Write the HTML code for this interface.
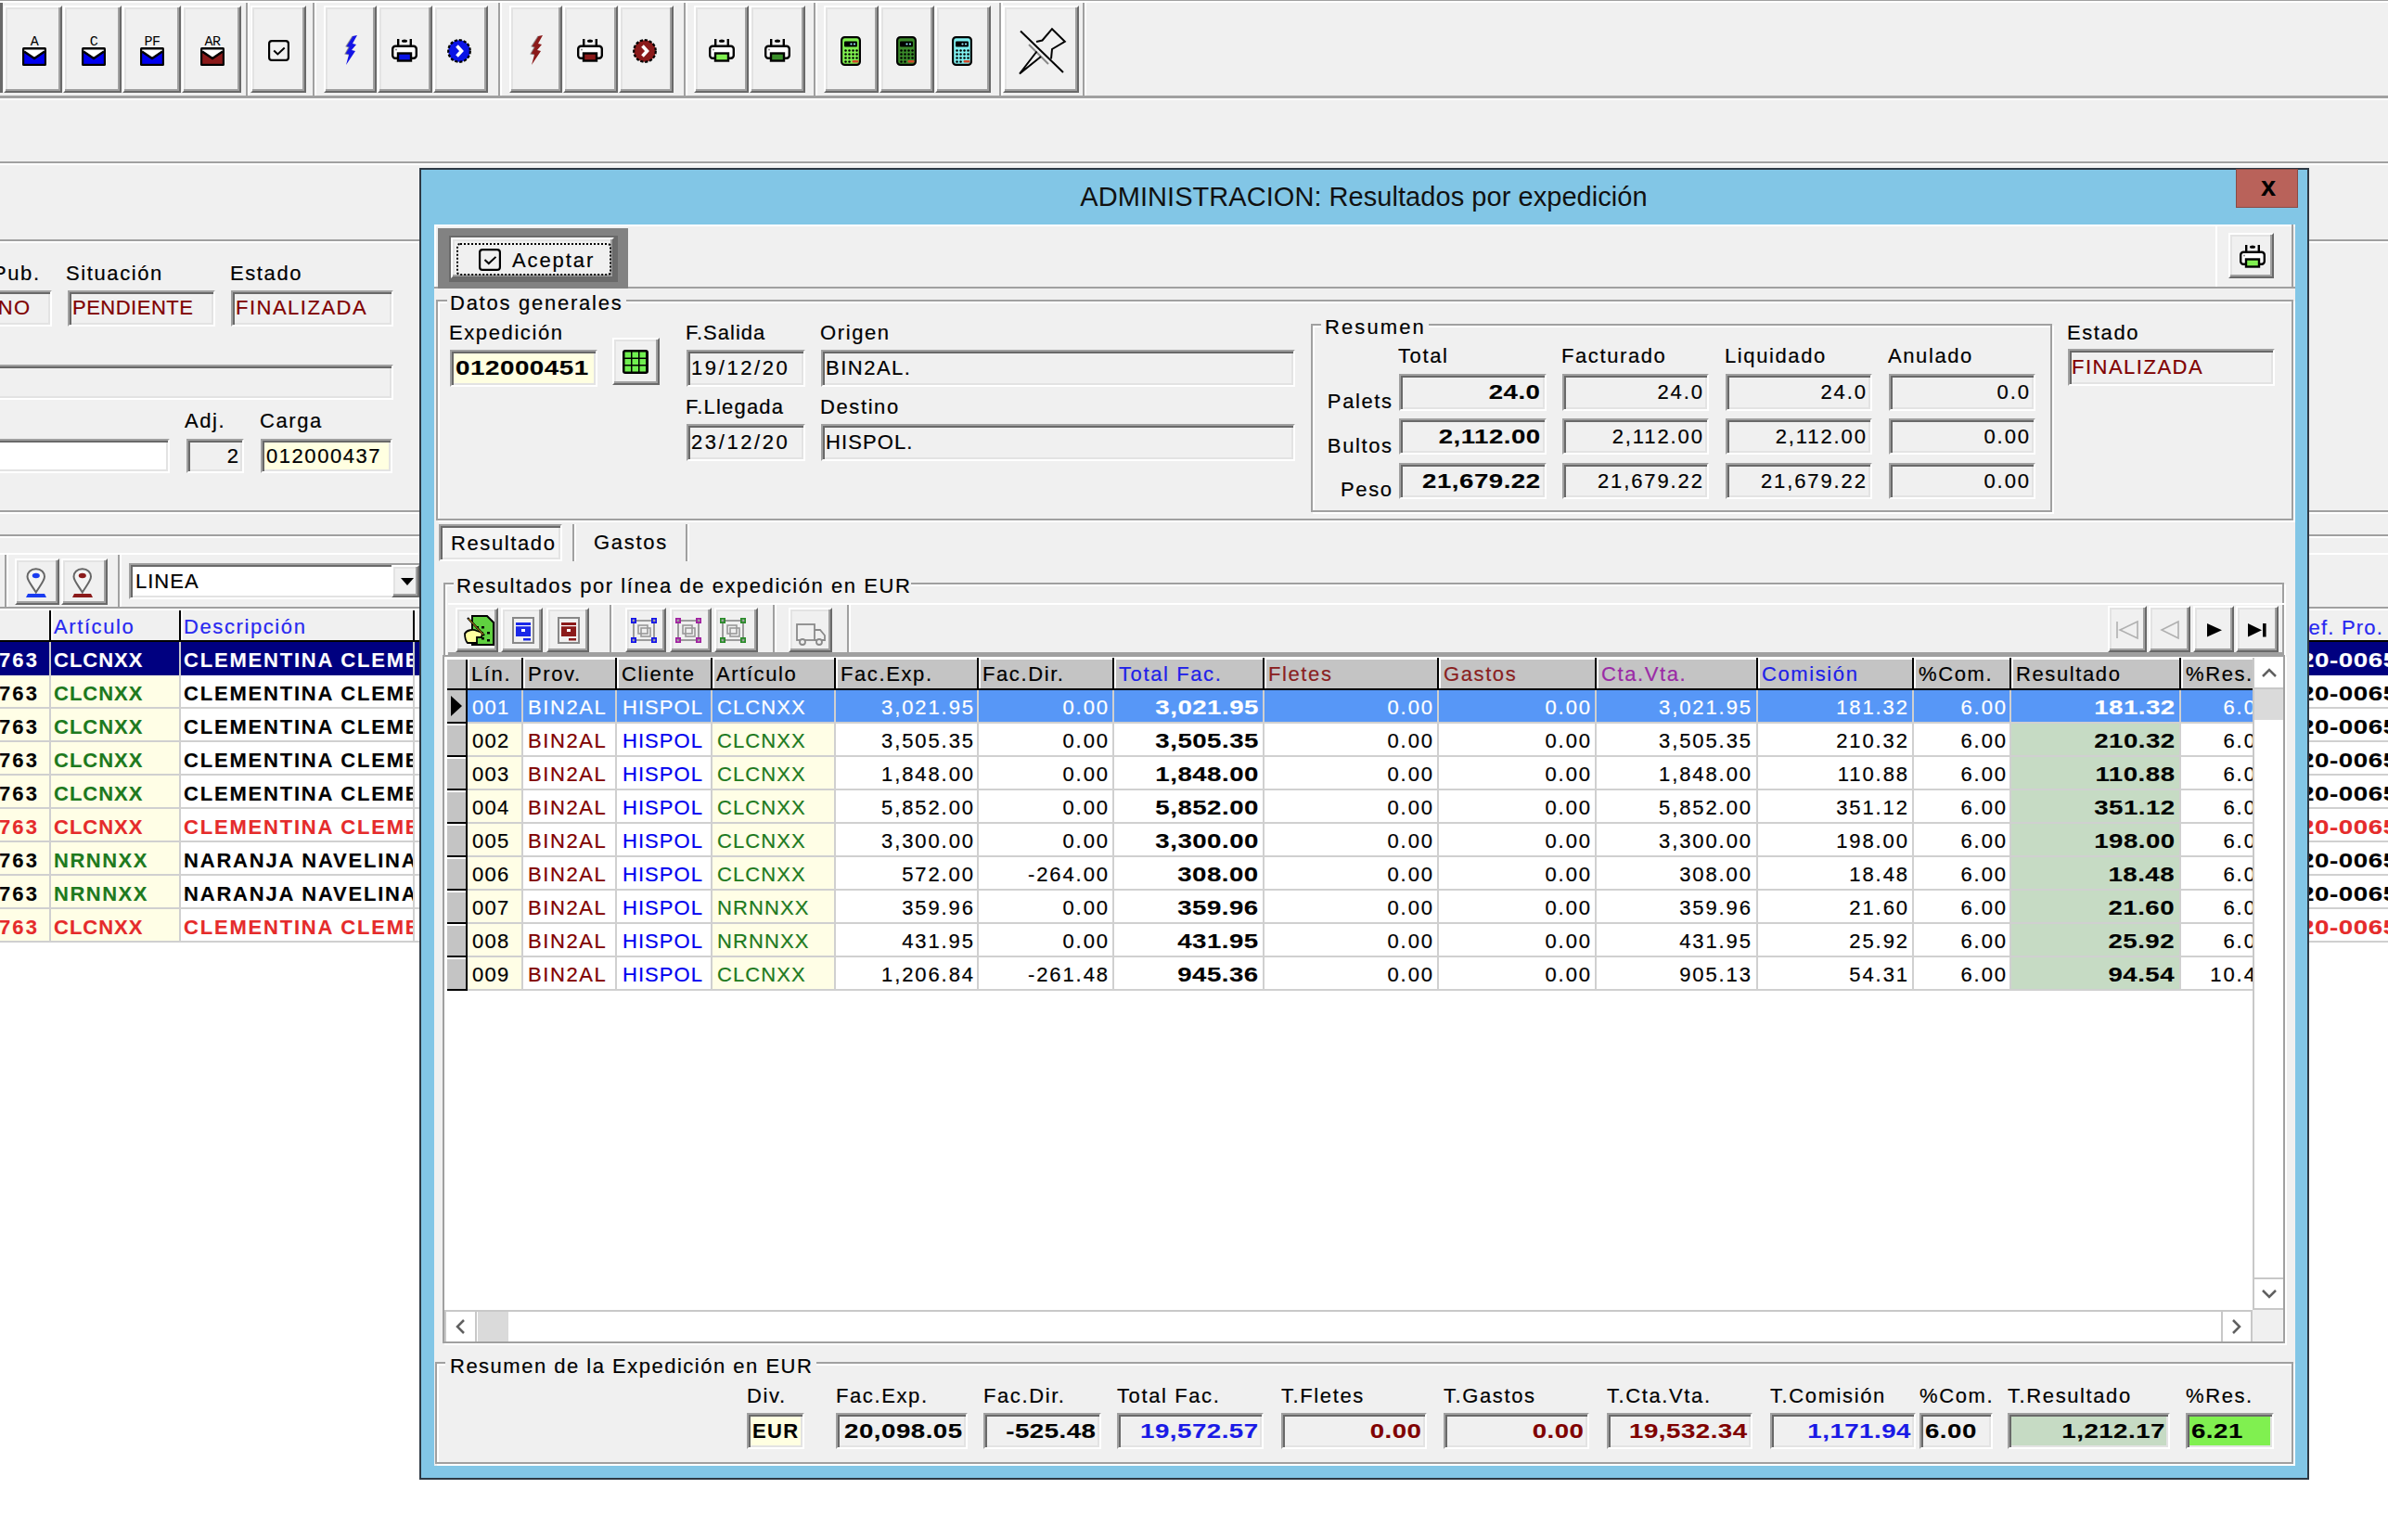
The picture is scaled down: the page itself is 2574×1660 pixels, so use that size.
<!DOCTYPE html>
<html><head><meta charset="utf-8"><style>
html,body{margin:0;padding:0;}
body{width:2574px;height:1660px;position:relative;overflow:hidden;background:#fff;font-family:"Liberation Sans",sans-serif;}
div,span,svg{position:absolute;}
span{font-family:"Liberation Sans",sans-serif;}
</style></head><body>
<div style="left:0px;top:0px;width:2574px;height:656px;background:#f0f0f0"></div>
<div style="left:0px;top:0px;width:2574px;height:1px;background:#a0a0a0"></div>
<div style="left:0px;top:1px;width:2574px;height:2px;background:#fff"></div>
<div style="left:0px;top:3px;width:3px;height:97px;background:#696969"></div>
<div style="left:4px;top:6px;width:63px;height:94px;box-sizing:border-box;background:#f0f0f0;border:2px solid;border-color:#fff #696969 #696969 #fff;box-shadow:inset -2px -2px #a0a0a0, inset 2px 2px #e3e3e3;"></div>
<div style="left:68px;top:6px;width:63px;height:94px;box-sizing:border-box;background:#f0f0f0;border:2px solid;border-color:#fff #696969 #696969 #fff;box-shadow:inset -2px -2px #a0a0a0, inset 2px 2px #e3e3e3;"></div>
<div style="left:132px;top:6px;width:63px;height:94px;box-sizing:border-box;background:#f0f0f0;border:2px solid;border-color:#fff #696969 #696969 #fff;box-shadow:inset -2px -2px #a0a0a0, inset 2px 2px #e3e3e3;"></div>
<div style="left:196px;top:6px;width:64px;height:94px;box-sizing:border-box;background:#f0f0f0;border:2px solid;border-color:#fff #696969 #696969 #fff;box-shadow:inset -2px -2px #a0a0a0, inset 2px 2px #e3e3e3;"></div>
<div style="left:270px;top:6px;width:60px;height:94px;box-sizing:border-box;background:#f0f0f0;border:2px solid;border-color:#fff #696969 #696969 #fff;box-shadow:inset -2px -2px #a0a0a0, inset 2px 2px #e3e3e3;"></div>
<div style="left:349px;top:6px;width:57px;height:94px;box-sizing:border-box;background:#f0f0f0;border:2px solid;border-color:#fff #696969 #696969 #fff;box-shadow:inset -2px -2px #a0a0a0, inset 2px 2px #e3e3e3;"></div>
<div style="left:407px;top:6px;width:59px;height:94px;box-sizing:border-box;background:#f0f0f0;border:2px solid;border-color:#fff #696969 #696969 #fff;box-shadow:inset -2px -2px #a0a0a0, inset 2px 2px #e3e3e3;"></div>
<div style="left:467px;top:6px;width:59px;height:94px;box-sizing:border-box;background:#f0f0f0;border:2px solid;border-color:#fff #696969 #696969 #fff;box-shadow:inset -2px -2px #a0a0a0, inset 2px 2px #e3e3e3;"></div>
<div style="left:549px;top:6px;width:57px;height:94px;box-sizing:border-box;background:#f0f0f0;border:2px solid;border-color:#fff #696969 #696969 #fff;box-shadow:inset -2px -2px #a0a0a0, inset 2px 2px #e3e3e3;"></div>
<div style="left:607px;top:6px;width:59px;height:94px;box-sizing:border-box;background:#f0f0f0;border:2px solid;border-color:#fff #696969 #696969 #fff;box-shadow:inset -2px -2px #a0a0a0, inset 2px 2px #e3e3e3;"></div>
<div style="left:667px;top:6px;width:59px;height:94px;box-sizing:border-box;background:#f0f0f0;border:2px solid;border-color:#fff #696969 #696969 #fff;box-shadow:inset -2px -2px #a0a0a0, inset 2px 2px #e3e3e3;"></div>
<div style="left:748px;top:6px;width:59px;height:94px;box-sizing:border-box;background:#f0f0f0;border:2px solid;border-color:#fff #696969 #696969 #fff;box-shadow:inset -2px -2px #a0a0a0, inset 2px 2px #e3e3e3;"></div>
<div style="left:808px;top:6px;width:60px;height:94px;box-sizing:border-box;background:#f0f0f0;border:2px solid;border-color:#fff #696969 #696969 #fff;box-shadow:inset -2px -2px #a0a0a0, inset 2px 2px #e3e3e3;"></div>
<div style="left:888px;top:6px;width:59px;height:94px;box-sizing:border-box;background:#f0f0f0;border:2px solid;border-color:#fff #696969 #696969 #fff;box-shadow:inset -2px -2px #a0a0a0, inset 2px 2px #e3e3e3;"></div>
<div style="left:948px;top:6px;width:59px;height:94px;box-sizing:border-box;background:#f0f0f0;border:2px solid;border-color:#fff #696969 #696969 #fff;box-shadow:inset -2px -2px #a0a0a0, inset 2px 2px #e3e3e3;"></div>
<div style="left:1008px;top:6px;width:60px;height:94px;box-sizing:border-box;background:#f0f0f0;border:2px solid;border-color:#fff #696969 #696969 #fff;box-shadow:inset -2px -2px #a0a0a0, inset 2px 2px #e3e3e3;"></div>
<div style="left:1081px;top:6px;width:82px;height:94px;box-sizing:border-box;background:#f0f0f0;border:2px solid;border-color:#fff #696969 #696969 #fff;box-shadow:inset -2px -2px #a0a0a0, inset 2px 2px #e3e3e3;"></div>
<div style="left:265px;top:3px;width:2px;height:101px;background:#a0a0a0"></div>
<div style="left:267px;top:3px;width:2px;height:101px;background:#fff"></div>
<div style="left:337px;top:3px;width:2px;height:101px;background:#a0a0a0"></div>
<div style="left:339px;top:3px;width:2px;height:101px;background:#fff"></div>
<div style="left:537px;top:3px;width:2px;height:101px;background:#a0a0a0"></div>
<div style="left:539px;top:3px;width:2px;height:101px;background:#fff"></div>
<div style="left:737px;top:3px;width:2px;height:101px;background:#a0a0a0"></div>
<div style="left:739px;top:3px;width:2px;height:101px;background:#fff"></div>
<div style="left:877px;top:3px;width:2px;height:101px;background:#a0a0a0"></div>
<div style="left:879px;top:3px;width:2px;height:101px;background:#fff"></div>
<div style="left:1077px;top:3px;width:2px;height:101px;background:#a0a0a0"></div>
<div style="left:1079px;top:3px;width:2px;height:101px;background:#fff"></div>
<div style="left:1167px;top:3px;width:2px;height:101px;background:#a0a0a0"></div>
<div style="left:1169px;top:3px;width:2px;height:101px;background:#fff"></div>
<div style="left:0px;top:103px;width:2574px;height:3px;background:#a0a0a0"></div>
<div style="left:0px;top:106px;width:2574px;height:2px;background:#fff"></div>
<div style="left:0px;top:174px;width:2574px;height:2px;background:#a0a0a0"></div>
<div style="left:0px;top:176px;width:2574px;height:2px;background:#fff"></div>
<div style="left:0px;top:258px;width:2574px;height:2px;background:#a0a0a0"></div>
<div style="left:0px;top:260px;width:2574px;height:2px;background:#fff"></div>
<div style="left:0px;top:550px;width:2574px;height:2px;background:#a0a0a0"></div>
<div style="left:0px;top:552px;width:2574px;height:2px;background:#fff"></div>
<div style="left:0px;top:576px;width:2574px;height:2px;background:#a0a0a0"></div>
<div style="left:0px;top:578px;width:2574px;height:2px;background:#fff"></div>
<div style="left:0px;top:596px;width:2574px;height:2px;background:#fff"></div>
<span style="top:284px;font-size:22px;line-height:22px;font-weight:400;color:#000;letter-spacing:1.6px;white-space:pre;-webkit-text-stroke:0.2px #000;right:2530.4px;">Pub.</span>
<span style="top:284px;font-size:22px;line-height:22px;font-weight:400;color:#000;letter-spacing:1.6px;white-space:pre;-webkit-text-stroke:0.2px #000;left:71px;">Situación</span>
<span style="top:284px;font-size:22px;line-height:22px;font-weight:400;color:#000;letter-spacing:1.6px;white-space:pre;-webkit-text-stroke:0.2px #000;left:248px;">Estado</span>
<div style="left:-10px;top:313px;width:66px;height:39px;box-sizing:border-box;background:#f0f0f0;border:2px solid;border-color:#a0a0a0 #fff #fff #a0a0a0;box-shadow:inset 2px 2px #696969, inset -2px -2px #e3e3e3;"></div>
<span style="top:321px;font-size:22px;line-height:22px;font-weight:400;color:#800000;letter-spacing:1.2px;white-space:pre;-webkit-text-stroke:0.2px #800000;right:2540.8px;">NO</span>
<div style="left:73px;top:313px;width:159px;height:39px;box-sizing:border-box;background:#f0f0f0;border:2px solid;border-color:#a0a0a0 #fff #fff #a0a0a0;box-shadow:inset 2px 2px #696969, inset -2px -2px #e3e3e3;"></div>
<span style="top:321px;font-size:22px;line-height:22px;font-weight:400;color:#800000;letter-spacing:0.5px;white-space:pre;-webkit-text-stroke:0.2px #800000;left:78px;">PENDIENTE</span>
<div style="left:249px;top:313px;width:175px;height:39px;box-sizing:border-box;background:#f0f0f0;border:2px solid;border-color:#a0a0a0 #fff #fff #a0a0a0;box-shadow:inset 2px 2px #696969, inset -2px -2px #e3e3e3;"></div>
<span style="top:321px;font-size:22px;line-height:22px;font-weight:400;color:#800000;letter-spacing:1.5px;white-space:pre;-webkit-text-stroke:0.2px #800000;left:254px;">FINALIZADA</span>
<div style="left:-10px;top:393px;width:434px;height:38px;box-sizing:border-box;background:#f0f0f0;border:2px solid;border-color:#a0a0a0 #fff #fff #a0a0a0;box-shadow:inset 2px 2px #696969, inset -2px -2px #e3e3e3;"></div>
<span style="top:443px;font-size:22px;line-height:22px;font-weight:400;color:#000;letter-spacing:1.6px;white-space:pre;-webkit-text-stroke:0.2px #000;left:199px;">Adj.</span>
<span style="top:443px;font-size:22px;line-height:22px;font-weight:400;color:#000;letter-spacing:1.6px;white-space:pre;-webkit-text-stroke:0.2px #000;left:280px;">Carga</span>
<div style="left:-10px;top:473px;width:193px;height:37px;box-sizing:border-box;background:#fff;border:2px solid;border-color:#a0a0a0 #fff #fff #a0a0a0;box-shadow:inset 2px 2px #696969, inset -2px -2px #e3e3e3;"></div>
<div style="left:201px;top:473px;width:62px;height:37px;box-sizing:border-box;background:#f0f0f0;border:2px solid;border-color:#a0a0a0 #fff #fff #a0a0a0;box-shadow:inset 2px 2px #696969, inset -2px -2px #e3e3e3;"></div>
<span style="top:481px;font-size:22px;line-height:22px;font-weight:400;color:#000;letter-spacing:1.9px;white-space:pre;-webkit-text-stroke:0.2px #000;right:2315.1px;">2</span>
<div style="left:281px;top:473px;width:142px;height:37px;box-sizing:border-box;background:#ffffe1;border:2px solid;border-color:#a0a0a0 #fff #fff #a0a0a0;box-shadow:inset 2px 2px #696969, inset -2px -2px #e3e3e3;"></div>
<span style="top:481px;font-size:22px;line-height:22px;font-weight:400;color:#000;letter-spacing:1.55px;white-space:pre;-webkit-text-stroke:0.2px #000;left:287px;">012000437</span>
<div style="left:5px;top:598px;width:2px;height:57px;background:#a0a0a0"></div>
<div style="left:7px;top:598px;width:2px;height:57px;background:#fff"></div>
<div style="left:127px;top:598px;width:2px;height:57px;background:#a0a0a0"></div>
<div style="left:129px;top:598px;width:2px;height:57px;background:#fff"></div>
<div style="left:16px;top:602px;width:48px;height:50px;box-sizing:border-box;background:#f0f0f0;border:2px solid;border-color:#fff #696969 #696969 #fff;box-shadow:inset -2px -2px #a0a0a0, inset 2px 2px #e3e3e3;"></div>
<div style="left:66px;top:602px;width:50px;height:50px;box-sizing:border-box;background:#f0f0f0;border:2px solid;border-color:#fff #696969 #696969 #fff;box-shadow:inset -2px -2px #a0a0a0, inset 2px 2px #e3e3e3;"></div>
<div style="left:139px;top:607px;width:321px;height:39px;box-sizing:border-box;background:#fff;border:2px solid;border-color:#a0a0a0 #fff #fff #a0a0a0;box-shadow:inset 2px 2px #696969, inset -2px -2px #e3e3e3;"></div>
<span style="top:616px;font-size:22px;line-height:22px;font-weight:400;color:#000;letter-spacing:1.0px;white-space:pre;-webkit-text-stroke:0.2px #000;left:146px;">LINEA</span>
<svg style="left:27px;top:612px;overflow:visible" width="24" height="33" viewBox="0 0 24 33"><path d="M11.8,1.2 C6,1.2 2.5,5 2.5,9.5 C2.5,14 8,20 11.8,26.5 C15.6,20 21,14 21,9.5 C21,5 17.5,1.2 11.8,1.2 Z" fill="#f4f4f4" stroke="#666" stroke-width="2"/><ellipse cx="11.8" cy="8.5" rx="4" ry="2.8" fill="#1a3cf0"/><polygon points="1,32 23,32 21,28 3,28" fill="#1a3cf0"/></svg>
<svg style="left:77px;top:612px;overflow:visible" width="24" height="33" viewBox="0 0 24 33"><path d="M11.8,1.2 C6,1.2 2.5,5 2.5,9.5 C2.5,14 8,20 11.8,26.5 C15.6,20 21,14 21,9.5 C21,5 17.5,1.2 11.8,1.2 Z" fill="#f4f4f4" stroke="#666" stroke-width="2"/><ellipse cx="11.8" cy="8.5" rx="4" ry="2.8" fill="#8b1a1a"/><polygon points="1,32 23,32 21,28 3,28" fill="#8b1a1a"/></svg>
<div style="left:422px;top:609px;width:30px;height:35px;box-sizing:border-box;background:#f0f0f0;border:2px solid;border-color:#fff #696969 #696969 #fff;box-shadow:inset -2px -2px #a0a0a0, inset 2px 2px #e3e3e3;"></div>
<svg style="left:432px;top:623px;overflow:visible" width="16" height="10" viewBox="0 0 16 10"><polygon points="0,0 14,0 7,8" fill="#000"/></svg>
<div style="left:0px;top:654px;width:2574px;height:2px;background:#a0a0a0"></div>
<svg style="left:23.5px;top:38.5px;overflow:visible" width="26" height="32" viewBox="0 0 26 32"><rect x="0" y="12" width="26" height="20" rx="1.5" fill="#000"/><rect x="2.2" y="14.5" width="21.6" height="2.5" fill="#fff"/><rect x="2.2" y="17" width="21.6" height="12.8" fill="#0000f0"/><polygon points="2.2,17 23.8,17 13,24" fill="#fff"/><polyline points="2,16.5 13,24 24,16.5" fill="none" stroke="#000" stroke-width="2.6"/><text x="13" y="10.3" text-anchor="middle" font-family="Liberation Mono" font-weight="400" font-size="15" letter-spacing="-0.5" fill="#000">A</text></svg>
<svg style="left:87.5px;top:38.5px;overflow:visible" width="26" height="32" viewBox="0 0 26 32"><rect x="0" y="12" width="26" height="20" rx="1.5" fill="#000"/><rect x="2.2" y="14.5" width="21.6" height="2.5" fill="#fff"/><rect x="2.2" y="17" width="21.6" height="12.8" fill="#0000f0"/><polygon points="2.2,17 23.8,17 13,24" fill="#fff"/><polyline points="2,16.5 13,24 24,16.5" fill="none" stroke="#000" stroke-width="2.6"/><text x="13" y="10.3" text-anchor="middle" font-family="Liberation Mono" font-weight="400" font-size="15" letter-spacing="-0.5" fill="#000">C</text></svg>
<svg style="left:151.3px;top:38.5px;overflow:visible" width="26" height="32" viewBox="0 0 26 32"><rect x="0" y="12" width="26" height="20" rx="1.5" fill="#000"/><rect x="2.2" y="14.5" width="21.6" height="2.5" fill="#fff"/><rect x="2.2" y="17" width="21.6" height="12.8" fill="#0000f0"/><polygon points="2.2,17 23.8,17 13,24" fill="#fff"/><polyline points="2,16.5 13,24 24,16.5" fill="none" stroke="#000" stroke-width="2.6"/><text x="13" y="10.3" text-anchor="middle" font-family="Liberation Mono" font-weight="400" font-size="15" letter-spacing="-0.5" fill="#000">PF</text></svg>
<svg style="left:215.5px;top:38.5px;overflow:visible" width="26" height="32" viewBox="0 0 26 32"><rect x="0" y="12" width="26" height="20" rx="1.5" fill="#000"/><rect x="2.2" y="14.5" width="21.6" height="2.5" fill="#fff"/><rect x="2.2" y="17" width="21.6" height="12.8" fill="#8b1a1a"/><polygon points="2.2,17 23.8,17 13,24" fill="#fff"/><polyline points="2,16.5 13,24 24,16.5" fill="none" stroke="#000" stroke-width="2.6"/><text x="13" y="10.3" text-anchor="middle" font-family="Liberation Mono" font-weight="400" font-size="15" letter-spacing="-0.5" fill="#000">AR</text></svg>
<svg style="left:288.5px;top:43px;overflow:visible" width="23" height="23" viewBox="0 0 23 23"><rect x="1.1" y="1.1" width="20.8" height="20.8" rx="3" fill="none" stroke="#000" stroke-width="2.2"/><polyline points="6.210000000000001,11.5 10.35,15.41 17.71,8.51" fill="none" stroke="#000" stroke-width="2"/></svg>
<svg style="left:370.5px;top:38.2px;overflow:visible" width="15" height="32" viewBox="0 0 15 32"><polygon points="9,1 14,0 9,9 13,10 8,16 12,17 2,32 5,21 1,20 5,13 2,12" fill="#1414e6"/><polyline points="9,1 2,12 5,13 1,20 5,21" stroke="#808080" stroke-width="1.2" fill="none" opacity="0.7"/></svg>
<svg style="left:422.2px;top:42px;overflow:visible" width="28" height="25" viewBox="0 0 28 25"><rect x="6" y="0" width="2.4" height="9" fill="#000"/><rect x="19.6" y="0" width="2.4" height="9" fill="#000"/><ellipse cx="14" cy="2.2" rx="3" ry="1.6" fill="#000"/><rect x="1.2" y="7.8" width="25.6" height="13" rx="3" fill="#fff" stroke="#000" stroke-width="2.4"/><circle cx="5" cy="11.5" r="1" fill="#888"/><rect x="7" y="15.5" width="14" height="8" fill="#0a14e6" stroke="#000" stroke-width="2.4"/></svg>
<svg style="left:482.2px;top:42.4px;overflow:visible" width="26" height="26" viewBox="0 0 26 26"><circle cx="13" cy="13" r="11.8" fill="#0a14e6" stroke="#000" stroke-width="2.2" stroke-dasharray="3.2 1.8"/><polyline points="10.5,7.5 15.5,13 10.5,18.5" fill="none" stroke="#fff" stroke-width="3.6"/></svg>
<svg style="left:570.5px;top:38.2px;overflow:visible" width="15" height="32" viewBox="0 0 15 32"><polygon points="9,1 14,0 9,9 13,10 8,16 12,17 2,32 5,21 1,20 5,13 2,12" fill="#8b1a1a"/><polyline points="9,1 2,12 5,13 1,20 5,21" stroke="#808080" stroke-width="1.2" fill="none" opacity="0.7"/></svg>
<svg style="left:622.2px;top:42px;overflow:visible" width="28" height="25" viewBox="0 0 28 25"><rect x="6" y="0" width="2.4" height="9" fill="#000"/><rect x="19.6" y="0" width="2.4" height="9" fill="#000"/><ellipse cx="14" cy="2.2" rx="3" ry="1.6" fill="#000"/><rect x="1.2" y="7.8" width="25.6" height="13" rx="3" fill="#fff" stroke="#000" stroke-width="2.4"/><circle cx="5" cy="11.5" r="1" fill="#888"/><rect x="7" y="15.5" width="14" height="8" fill="#8b1a1a" stroke="#000" stroke-width="2.4"/></svg>
<svg style="left:682.2px;top:42.4px;overflow:visible" width="26" height="26" viewBox="0 0 26 26"><circle cx="13" cy="13" r="11.8" fill="#8b1a1a" stroke="#000" stroke-width="2.2" stroke-dasharray="3.2 1.8"/><polyline points="10.5,7.5 15.5,13 10.5,18.5" fill="none" stroke="#fff" stroke-width="3.6"/></svg>
<svg style="left:764.4px;top:42px;overflow:visible" width="28" height="25" viewBox="0 0 28 25"><rect x="6" y="0" width="2.4" height="9" fill="#000"/><rect x="19.6" y="0" width="2.4" height="9" fill="#000"/><ellipse cx="14" cy="2.2" rx="3" ry="1.6" fill="#000"/><rect x="1.2" y="7.8" width="25.6" height="13" rx="3" fill="#fff" stroke="#000" stroke-width="2.4"/><circle cx="5" cy="11.5" r="1" fill="#888"/><rect x="7" y="15.5" width="14" height="8" fill="#80f050" stroke="#000" stroke-width="2.4"/></svg>
<svg style="left:824.2px;top:42px;overflow:visible" width="28" height="25" viewBox="0 0 28 25"><rect x="6" y="0" width="2.4" height="9" fill="#000"/><rect x="19.6" y="0" width="2.4" height="9" fill="#000"/><ellipse cx="14" cy="2.2" rx="3" ry="1.6" fill="#000"/><rect x="1.2" y="7.8" width="25.6" height="13" rx="3" fill="#fff" stroke="#000" stroke-width="2.4"/><circle cx="5" cy="11.5" r="1" fill="#888"/><rect x="7" y="15.5" width="14" height="8" fill="#3a8f2a" stroke="#000" stroke-width="2.4"/></svg>
<svg style="left:906px;top:38.5px;overflow:visible" width="22" height="32" viewBox="0 0 22 32"><rect x="1.1" y="1.1" width="19.8" height="29.8" rx="3.5" fill="#80f050" stroke="#000" stroke-width="2.2"/><rect x="4" y="5.5" width="14" height="6" rx="1" fill="#000"/><circle cx="11.5" cy="8.5" r="1.1" fill="#9ef"/><circle cx="15" cy="8.5" r="1.1" fill="#9ef"/><circle cx="5.5" cy="15.5" r="1.25" fill="#000"/><circle cx="9.5" cy="15.5" r="1.25" fill="#000"/><circle cx="13.5" cy="15.5" r="1.25" fill="#000"/><circle cx="17.5" cy="15.5" r="1.25" fill="#000"/><circle cx="5.5" cy="19.5" r="1.25" fill="#000"/><circle cx="9.5" cy="19.5" r="1.25" fill="#000"/><circle cx="13.5" cy="19.5" r="1.25" fill="#000"/><circle cx="17.5" cy="19.5" r="1.25" fill="#000"/><circle cx="5.5" cy="23.5" r="1.25" fill="#000"/><circle cx="9.5" cy="23.5" r="1.25" fill="#000"/><circle cx="13.5" cy="23.5" r="1.25" fill="#000"/><circle cx="17.5" cy="23.5" r="1.25" fill="#000"/><circle cx="5.5" cy="27.5" r="1.25" fill="#000"/><circle cx="9.5" cy="27.5" r="1.25" fill="#000"/><rect x="12.5" y="26" width="7" height="2.6" rx="1" fill="#d2462a"/></svg>
<svg style="left:966px;top:38.5px;overflow:visible" width="22" height="32" viewBox="0 0 22 32"><rect x="1.1" y="1.1" width="19.8" height="29.8" rx="3.5" fill="#3a8a2a" stroke="#000" stroke-width="2.2"/><rect x="4" y="5.5" width="14" height="6" rx="1" fill="#000"/><circle cx="11.5" cy="8.5" r="1.1" fill="#9ef"/><circle cx="15" cy="8.5" r="1.1" fill="#9ef"/><circle cx="5.5" cy="15.5" r="1.25" fill="#000"/><circle cx="9.5" cy="15.5" r="1.25" fill="#000"/><circle cx="13.5" cy="15.5" r="1.25" fill="#000"/><circle cx="17.5" cy="15.5" r="1.25" fill="#000"/><circle cx="5.5" cy="19.5" r="1.25" fill="#000"/><circle cx="9.5" cy="19.5" r="1.25" fill="#000"/><circle cx="13.5" cy="19.5" r="1.25" fill="#000"/><circle cx="17.5" cy="19.5" r="1.25" fill="#000"/><circle cx="5.5" cy="23.5" r="1.25" fill="#000"/><circle cx="9.5" cy="23.5" r="1.25" fill="#000"/><circle cx="13.5" cy="23.5" r="1.25" fill="#000"/><circle cx="17.5" cy="23.5" r="1.25" fill="#000"/><circle cx="5.5" cy="27.5" r="1.25" fill="#000"/><circle cx="9.5" cy="27.5" r="1.25" fill="#000"/><rect x="12.5" y="26" width="7" height="2.6" rx="1" fill="#d2462a"/></svg>
<svg style="left:1026px;top:38.5px;overflow:visible" width="22" height="32" viewBox="0 0 22 32"><rect x="1.1" y="1.1" width="19.8" height="29.8" rx="3.5" fill="#80f0f0" stroke="#000" stroke-width="2.2"/><rect x="4" y="5.5" width="14" height="6" rx="1" fill="#000"/><circle cx="11.5" cy="8.5" r="1.1" fill="#9ef"/><circle cx="15" cy="8.5" r="1.1" fill="#9ef"/><circle cx="5.5" cy="15.5" r="1.25" fill="#000"/><circle cx="9.5" cy="15.5" r="1.25" fill="#000"/><circle cx="13.5" cy="15.5" r="1.25" fill="#000"/><circle cx="17.5" cy="15.5" r="1.25" fill="#000"/><circle cx="5.5" cy="19.5" r="1.25" fill="#000"/><circle cx="9.5" cy="19.5" r="1.25" fill="#000"/><circle cx="13.5" cy="19.5" r="1.25" fill="#000"/><circle cx="17.5" cy="19.5" r="1.25" fill="#000"/><circle cx="5.5" cy="23.5" r="1.25" fill="#000"/><circle cx="9.5" cy="23.5" r="1.25" fill="#000"/><circle cx="13.5" cy="23.5" r="1.25" fill="#000"/><circle cx="17.5" cy="23.5" r="1.25" fill="#000"/><circle cx="5.5" cy="27.5" r="1.25" fill="#000"/><circle cx="9.5" cy="27.5" r="1.25" fill="#000"/><rect x="12.5" y="26" width="7" height="2.6" rx="1" fill="#d2462a"/></svg>
<svg style="left:1097.5px;top:30px;overflow:visible" width="51" height="51" viewBox="0 0 51 51"><polyline points="19,15 25.5,13.5 36,1.2 49.8,14.8 36,23 35,33.5" fill="none" stroke="#000" stroke-width="2"/><line x1="11" y1="18" x2="32" y2="39" stroke="#888" stroke-width="2"/><polyline points="19.5,25.5 1,49.5 24,31" fill="none" stroke="#000" stroke-width="2"/><line x1="2" y1="3.5" x2="48" y2="48" stroke="#000" stroke-width="2"/></svg>
<div style="left:0px;top:656px;width:2574px;height:1004px;background:#fff"></div>
<div style="left:0px;top:656px;width:452px;height:36px;background:#f0f0f0"></div>
<div style="left:0px;top:690px;width:452px;height:2px;background:#000"></div>
<div style="left:53px;top:656px;width:2px;height:36px;background:#000"></div>
<div style="left:55px;top:656px;width:2px;height:34px;background:#fff"></div>
<div style="left:193px;top:656px;width:2px;height:36px;background:#000"></div>
<div style="left:195px;top:656px;width:2px;height:34px;background:#fff"></div>
<div style="left:445px;top:656px;width:2px;height:36px;background:#000"></div>
<div style="left:447px;top:656px;width:2px;height:34px;background:#fff"></div>
<div style="left:0px;top:656px;width:452px;height:2px;background:#fff"></div>
<span style="top:665px;font-size:22px;line-height:22px;font-weight:400;color:#2828f0;letter-spacing:1.6px;white-space:pre;-webkit-text-stroke:0.2px #2828f0;left:58px;">Artículo</span>
<span style="top:665px;font-size:22px;line-height:22px;font-weight:400;color:#2828f0;letter-spacing:1.6px;white-space:pre;-webkit-text-stroke:0.2px #2828f0;left:198px;">Descripción</span>
<div style="left:2488px;top:656px;width:86px;height:36px;background:#f0f0f0"></div>
<div style="left:2488px;top:656px;width:86px;height:2px;background:#fff"></div>
<div style="left:2488px;top:690px;width:86px;height:2px;background:#000"></div>
<span style="top:666px;font-size:22px;line-height:22px;font-weight:400;color:#2828f0;letter-spacing:1.2px;white-space:pre;-webkit-text-stroke:0.2px #2828f0;left:2471.5px;">Ref. Pro.</span>
<div style="left:0px;top:692px;width:452px;height:36px;background:#000080"></div>
<div style="left:2488px;top:692px;width:86px;height:36px;background:#000080"></div>
<div style="left:53px;top:692px;width:2px;height:36px;background:#c8c8c8"></div>
<div style="left:193px;top:692px;width:2px;height:36px;background:#c8c8c8"></div>
<div style="left:445px;top:692px;width:2px;height:36px;background:#c8c8c8"></div>
<span style="top:701px;font-size:22px;line-height:22px;font-weight:700;color:#fff;letter-spacing:2.2px;white-space:pre;-webkit-text-stroke:0.12px #fff;right:2531.8px;">763</span>
<span style="top:701px;font-size:22px;line-height:22px;font-weight:700;color:#fff;letter-spacing:1.0px;white-space:pre;-webkit-text-stroke:0.12px #fff;left:58px;">CLCNXX</span>
<div style="left:193px;top:692px;width:252px;height:36px;overflow:hidden">
<div style="left:-193px;top:-692px;width:2574px;height:1660px">
<span style="top:701px;font-size:22px;line-height:22px;font-weight:700;color:#fff;letter-spacing:1.8px;white-space:pre;-webkit-text-stroke:0.12px #fff;left:198px;">CLEMENTINA CLEME</span>
</div></div>
<span style="top:701px;font-size:22px;line-height:22px;font-weight:700;color:#fff;letter-spacing:0.42px;white-space:pre;-webkit-text-stroke:0.12px #fff;transform:scaleX(1.262);left:2479px;transform-origin:0 0;">20-0065</span>
<div style="left:0px;top:728px;width:53px;height:34px;background:#fffee6"></div>
<div style="left:55px;top:728px;width:138px;height:34px;background:#fffee6"></div>
<div style="left:0px;top:762px;width:452px;height:2px;background:#d0d0d0"></div>
<div style="left:53px;top:728px;width:2px;height:36px;background:#d0d0d0"></div>
<div style="left:193px;top:728px;width:2px;height:36px;background:#d0d0d0"></div>
<div style="left:445px;top:728px;width:2px;height:36px;background:#d0d0d0"></div>
<div style="left:2488px;top:762px;width:86px;height:2px;background:#d0d0d0"></div>
<span style="top:737px;font-size:22px;line-height:22px;font-weight:700;color:#000;letter-spacing:2.2px;white-space:pre;-webkit-text-stroke:0.12px #000;right:2531.8px;">763</span>
<span style="top:737px;font-size:22px;line-height:22px;font-weight:700;color:#1e7a1e;letter-spacing:1.0px;white-space:pre;-webkit-text-stroke:0.12px #1e7a1e;left:58px;">CLCNXX</span>
<div style="left:193px;top:728px;width:252px;height:36px;overflow:hidden">
<div style="left:-193px;top:-728px;width:2574px;height:1660px">
<span style="top:737px;font-size:22px;line-height:22px;font-weight:700;color:#000;letter-spacing:1.8px;white-space:pre;-webkit-text-stroke:0.12px #000;left:198px;">CLEMENTINA CLEME</span>
</div></div>
<span style="top:737px;font-size:22px;line-height:22px;font-weight:700;color:#000;letter-spacing:0.42px;white-space:pre;-webkit-text-stroke:0.12px #000;transform:scaleX(1.262);left:2479px;transform-origin:0 0;">20-0065</span>
<div style="left:0px;top:764px;width:53px;height:34px;background:#fffee6"></div>
<div style="left:55px;top:764px;width:138px;height:34px;background:#fffee6"></div>
<div style="left:0px;top:798px;width:452px;height:2px;background:#d0d0d0"></div>
<div style="left:53px;top:764px;width:2px;height:36px;background:#d0d0d0"></div>
<div style="left:193px;top:764px;width:2px;height:36px;background:#d0d0d0"></div>
<div style="left:445px;top:764px;width:2px;height:36px;background:#d0d0d0"></div>
<div style="left:2488px;top:798px;width:86px;height:2px;background:#d0d0d0"></div>
<span style="top:773px;font-size:22px;line-height:22px;font-weight:700;color:#000;letter-spacing:2.2px;white-space:pre;-webkit-text-stroke:0.12px #000;right:2531.8px;">763</span>
<span style="top:773px;font-size:22px;line-height:22px;font-weight:700;color:#1e7a1e;letter-spacing:1.0px;white-space:pre;-webkit-text-stroke:0.12px #1e7a1e;left:58px;">CLCNXX</span>
<div style="left:193px;top:764px;width:252px;height:36px;overflow:hidden">
<div style="left:-193px;top:-764px;width:2574px;height:1660px">
<span style="top:773px;font-size:22px;line-height:22px;font-weight:700;color:#000;letter-spacing:1.8px;white-space:pre;-webkit-text-stroke:0.12px #000;left:198px;">CLEMENTINA CLEME</span>
</div></div>
<span style="top:773px;font-size:22px;line-height:22px;font-weight:700;color:#000;letter-spacing:0.42px;white-space:pre;-webkit-text-stroke:0.12px #000;transform:scaleX(1.262);left:2479px;transform-origin:0 0;">20-0065</span>
<div style="left:0px;top:800px;width:53px;height:34px;background:#fffee6"></div>
<div style="left:55px;top:800px;width:138px;height:34px;background:#fffee6"></div>
<div style="left:0px;top:834px;width:452px;height:2px;background:#d0d0d0"></div>
<div style="left:53px;top:800px;width:2px;height:36px;background:#d0d0d0"></div>
<div style="left:193px;top:800px;width:2px;height:36px;background:#d0d0d0"></div>
<div style="left:445px;top:800px;width:2px;height:36px;background:#d0d0d0"></div>
<div style="left:2488px;top:834px;width:86px;height:2px;background:#d0d0d0"></div>
<span style="top:809px;font-size:22px;line-height:22px;font-weight:700;color:#000;letter-spacing:2.2px;white-space:pre;-webkit-text-stroke:0.12px #000;right:2531.8px;">763</span>
<span style="top:809px;font-size:22px;line-height:22px;font-weight:700;color:#1e7a1e;letter-spacing:1.0px;white-space:pre;-webkit-text-stroke:0.12px #1e7a1e;left:58px;">CLCNXX</span>
<div style="left:193px;top:800px;width:252px;height:36px;overflow:hidden">
<div style="left:-193px;top:-800px;width:2574px;height:1660px">
<span style="top:809px;font-size:22px;line-height:22px;font-weight:700;color:#000;letter-spacing:1.8px;white-space:pre;-webkit-text-stroke:0.12px #000;left:198px;">CLEMENTINA CLEME</span>
</div></div>
<span style="top:809px;font-size:22px;line-height:22px;font-weight:700;color:#000;letter-spacing:0.42px;white-space:pre;-webkit-text-stroke:0.12px #000;transform:scaleX(1.262);left:2479px;transform-origin:0 0;">20-0065</span>
<div style="left:0px;top:836px;width:53px;height:34px;background:#fffee6"></div>
<div style="left:55px;top:836px;width:138px;height:34px;background:#fffee6"></div>
<div style="left:0px;top:870px;width:452px;height:2px;background:#d0d0d0"></div>
<div style="left:53px;top:836px;width:2px;height:36px;background:#d0d0d0"></div>
<div style="left:193px;top:836px;width:2px;height:36px;background:#d0d0d0"></div>
<div style="left:445px;top:836px;width:2px;height:36px;background:#d0d0d0"></div>
<div style="left:2488px;top:870px;width:86px;height:2px;background:#d0d0d0"></div>
<span style="top:845px;font-size:22px;line-height:22px;font-weight:700;color:#000;letter-spacing:2.2px;white-space:pre;-webkit-text-stroke:0.12px #000;right:2531.8px;">763</span>
<span style="top:845px;font-size:22px;line-height:22px;font-weight:700;color:#1e7a1e;letter-spacing:1.0px;white-space:pre;-webkit-text-stroke:0.12px #1e7a1e;left:58px;">CLCNXX</span>
<div style="left:193px;top:836px;width:252px;height:36px;overflow:hidden">
<div style="left:-193px;top:-836px;width:2574px;height:1660px">
<span style="top:845px;font-size:22px;line-height:22px;font-weight:700;color:#000;letter-spacing:1.8px;white-space:pre;-webkit-text-stroke:0.12px #000;left:198px;">CLEMENTINA CLEME</span>
</div></div>
<span style="top:845px;font-size:22px;line-height:22px;font-weight:700;color:#000;letter-spacing:0.42px;white-space:pre;-webkit-text-stroke:0.12px #000;transform:scaleX(1.262);left:2479px;transform-origin:0 0;">20-0065</span>
<div style="left:0px;top:872px;width:53px;height:34px;background:#fffee6"></div>
<div style="left:55px;top:872px;width:138px;height:34px;background:#fffee6"></div>
<div style="left:0px;top:906px;width:452px;height:2px;background:#d0d0d0"></div>
<div style="left:53px;top:872px;width:2px;height:36px;background:#d0d0d0"></div>
<div style="left:193px;top:872px;width:2px;height:36px;background:#d0d0d0"></div>
<div style="left:445px;top:872px;width:2px;height:36px;background:#d0d0d0"></div>
<div style="left:2488px;top:906px;width:86px;height:2px;background:#d0d0d0"></div>
<span style="top:881px;font-size:22px;line-height:22px;font-weight:700;color:#e52b2b;letter-spacing:2.2px;white-space:pre;-webkit-text-stroke:0.12px #e52b2b;right:2531.8px;">763</span>
<span style="top:881px;font-size:22px;line-height:22px;font-weight:700;color:#e52b2b;letter-spacing:1.0px;white-space:pre;-webkit-text-stroke:0.12px #e52b2b;left:58px;">CLCNXX</span>
<div style="left:193px;top:872px;width:252px;height:36px;overflow:hidden">
<div style="left:-193px;top:-872px;width:2574px;height:1660px">
<span style="top:881px;font-size:22px;line-height:22px;font-weight:700;color:#e52b2b;letter-spacing:1.8px;white-space:pre;-webkit-text-stroke:0.12px #e52b2b;left:198px;">CLEMENTINA CLEME</span>
</div></div>
<span style="top:881px;font-size:22px;line-height:22px;font-weight:700;color:#e52b2b;letter-spacing:0.42px;white-space:pre;-webkit-text-stroke:0.12px #e52b2b;transform:scaleX(1.262);left:2479px;transform-origin:0 0;">20-0065</span>
<div style="left:0px;top:908px;width:53px;height:34px;background:#fffee6"></div>
<div style="left:55px;top:908px;width:138px;height:34px;background:#fffee6"></div>
<div style="left:0px;top:942px;width:452px;height:2px;background:#d0d0d0"></div>
<div style="left:53px;top:908px;width:2px;height:36px;background:#d0d0d0"></div>
<div style="left:193px;top:908px;width:2px;height:36px;background:#d0d0d0"></div>
<div style="left:445px;top:908px;width:2px;height:36px;background:#d0d0d0"></div>
<div style="left:2488px;top:942px;width:86px;height:2px;background:#d0d0d0"></div>
<span style="top:917px;font-size:22px;line-height:22px;font-weight:700;color:#000;letter-spacing:2.2px;white-space:pre;-webkit-text-stroke:0.12px #000;right:2531.8px;">763</span>
<span style="top:917px;font-size:22px;line-height:22px;font-weight:700;color:#1e7a1e;letter-spacing:1.5px;white-space:pre;-webkit-text-stroke:0.12px #1e7a1e;left:58px;">NRNNXX</span>
<div style="left:193px;top:908px;width:252px;height:36px;overflow:hidden">
<div style="left:-193px;top:-908px;width:2574px;height:1660px">
<span style="top:917px;font-size:22px;line-height:22px;font-weight:700;color:#000;letter-spacing:1.8px;white-space:pre;-webkit-text-stroke:0.12px #000;left:198px;">NARANJA NAVELINA</span>
</div></div>
<span style="top:917px;font-size:22px;line-height:22px;font-weight:700;color:#000;letter-spacing:0.42px;white-space:pre;-webkit-text-stroke:0.12px #000;transform:scaleX(1.262);left:2479px;transform-origin:0 0;">20-0065</span>
<div style="left:0px;top:944px;width:53px;height:34px;background:#fffee6"></div>
<div style="left:55px;top:944px;width:138px;height:34px;background:#fffee6"></div>
<div style="left:0px;top:978px;width:452px;height:2px;background:#d0d0d0"></div>
<div style="left:53px;top:944px;width:2px;height:36px;background:#d0d0d0"></div>
<div style="left:193px;top:944px;width:2px;height:36px;background:#d0d0d0"></div>
<div style="left:445px;top:944px;width:2px;height:36px;background:#d0d0d0"></div>
<div style="left:2488px;top:978px;width:86px;height:2px;background:#d0d0d0"></div>
<span style="top:953px;font-size:22px;line-height:22px;font-weight:700;color:#000;letter-spacing:2.2px;white-space:pre;-webkit-text-stroke:0.12px #000;right:2531.8px;">763</span>
<span style="top:953px;font-size:22px;line-height:22px;font-weight:700;color:#1e7a1e;letter-spacing:1.5px;white-space:pre;-webkit-text-stroke:0.12px #1e7a1e;left:58px;">NRNNXX</span>
<div style="left:193px;top:944px;width:252px;height:36px;overflow:hidden">
<div style="left:-193px;top:-944px;width:2574px;height:1660px">
<span style="top:953px;font-size:22px;line-height:22px;font-weight:700;color:#000;letter-spacing:1.8px;white-space:pre;-webkit-text-stroke:0.12px #000;left:198px;">NARANJA NAVELINA</span>
</div></div>
<span style="top:953px;font-size:22px;line-height:22px;font-weight:700;color:#000;letter-spacing:0.42px;white-space:pre;-webkit-text-stroke:0.12px #000;transform:scaleX(1.262);left:2479px;transform-origin:0 0;">20-0065</span>
<div style="left:0px;top:980px;width:53px;height:34px;background:#fffee6"></div>
<div style="left:55px;top:980px;width:138px;height:34px;background:#fffee6"></div>
<div style="left:0px;top:1014px;width:452px;height:2px;background:#d0d0d0"></div>
<div style="left:53px;top:980px;width:2px;height:36px;background:#d0d0d0"></div>
<div style="left:193px;top:980px;width:2px;height:36px;background:#d0d0d0"></div>
<div style="left:445px;top:980px;width:2px;height:36px;background:#d0d0d0"></div>
<div style="left:2488px;top:1014px;width:86px;height:2px;background:#d0d0d0"></div>
<span style="top:989px;font-size:22px;line-height:22px;font-weight:700;color:#e52b2b;letter-spacing:2.2px;white-space:pre;-webkit-text-stroke:0.12px #e52b2b;right:2531.8px;">763</span>
<span style="top:989px;font-size:22px;line-height:22px;font-weight:700;color:#e52b2b;letter-spacing:1.0px;white-space:pre;-webkit-text-stroke:0.12px #e52b2b;left:58px;">CLCNXX</span>
<div style="left:193px;top:980px;width:252px;height:36px;overflow:hidden">
<div style="left:-193px;top:-980px;width:2574px;height:1660px">
<span style="top:989px;font-size:22px;line-height:22px;font-weight:700;color:#e52b2b;letter-spacing:1.8px;white-space:pre;-webkit-text-stroke:0.12px #e52b2b;left:198px;">CLEMENTINA CLEME</span>
</div></div>
<span style="top:989px;font-size:22px;line-height:22px;font-weight:700;color:#e52b2b;letter-spacing:0.42px;white-space:pre;-webkit-text-stroke:0.12px #e52b2b;transform:scaleX(1.262);left:2479px;transform-origin:0 0;">20-0065</span>
<div style="left:452px;top:181px;width:2037px;height:1414px;box-sizing:border-box;background:#82c6e6;border:2px solid #2e3944;"></div>
<div style="left:2410px;top:182px;width:67px;height:42px;box-sizing:border-box;background:#b9625a;border:1px solid #8a4a44;"></div>
<span style="top:187px;font-size:29px;line-height:29px;font-weight:700;color:#000;letter-spacing:0px;white-space:pre;left:1445px;width:2000px;text-align:center;font-family:'Liberation Sans';">x</span>
<span style="top:198px;font-size:29px;line-height:29px;font-weight:400;color:#111;letter-spacing:0.05px;white-space:pre;left:470px;width:2000px;text-align:center;">ADMINISTRACION: Resultados por expedición</span>
<div style="left:468px;top:242px;width:2006px;height:1338px;background:#f0f0f0"></div>
<div style="left:468px;top:242px;width:2006px;height:2px;background:#fff"></div>
<div style="left:468px;top:242px;width:2px;height:69px;background:#fff"></div>
<div style="left:468px;top:309px;width:2006px;height:2px;background:#a0a0a0"></div>
<div style="left:2470px;top:242px;width:2px;height:69px;background:#a0a0a0"></div>
<div style="left:2388px;top:244px;width:2px;height:65px;background:#fff"></div>
<div style="left:472px;top:246px;width:205px;height:65px;background:#828282"></div>
<div style="left:484px;top:254px;width:182px;height:50px;background:#6a6a6a"></div>
<div style="left:486px;top:256px;width:176px;height:44px;box-sizing:border-box;background:#f0f0f0;border:2px solid;border-color:#fff #696969 #696969 #fff;box-shadow:inset -2px -2px #a0a0a0, inset 2px 2px #e3e3e3;"></div>
<div style="left:492px;top:262px;width:167px;height:35px;box-sizing:border-box;border:2px dotted #000;border-radius:4px;"></div>
<span style="top:270px;font-size:22px;line-height:22px;font-weight:400;color:#000;letter-spacing:1.9px;white-space:pre;-webkit-text-stroke:0.2px #000;left:552px;">Aceptar</span>
<svg style="left:516px;top:268px;overflow:visible" width="24" height="24" viewBox="0 0 24 24"><rect x="1.1" y="1.1" width="21.8" height="21.8" rx="3" fill="none" stroke="#000" stroke-width="2.2"/><polyline points="6.48,12.0 10.8,16.080000000000002 18.48,8.879999999999999" fill="none" stroke="#000" stroke-width="2"/></svg>
<div style="left:2402px;top:251px;width:49px;height:49px;box-sizing:border-box;background:#f0f0f0;border:2px solid;border-color:#fff #696969 #696969 #fff;box-shadow:inset -2px -2px #a0a0a0, inset 2px 2px #e3e3e3;"></div>
<svg style="left:2413.5px;top:263.5px;overflow:visible" width="28" height="25" viewBox="0 0 28 25"><rect x="6" y="0" width="2.4" height="9" fill="#000"/><rect x="19.6" y="0" width="2.4" height="9" fill="#000"/><ellipse cx="14" cy="2.2" rx="3" ry="1.6" fill="#000"/><rect x="1.2" y="7.8" width="25.6" height="13" rx="3" fill="#fff" stroke="#000" stroke-width="2.4"/><circle cx="5" cy="11.5" r="1" fill="#888"/><rect x="7" y="15.5" width="14" height="8" fill="#80f050" stroke="#000" stroke-width="2.4"/></svg>
<div style="left:470px;top:323px;width:2002px;height:238px;box-sizing:border-box;border:2px solid #a0a0a0;box-shadow:inset 2px 2px #fff, 2px 2px #fff;"></div>
<div style="left:482px;top:312px;width:193px;height:24px;background:#f0f0f0"></div>
<span style="top:316px;font-size:22px;line-height:22px;font-weight:400;color:#000;letter-spacing:1.75px;white-space:pre;-webkit-text-stroke:0.2px #000;left:485px;">Datos generales</span>
<span style="top:348px;font-size:22px;line-height:22px;font-weight:400;color:#000;letter-spacing:1.6px;white-space:pre;-webkit-text-stroke:0.2px #000;left:484px;">Expedición</span>
<div style="left:485px;top:377px;width:159px;height:40px;box-sizing:border-box;background:#ffffe1;border:2px solid;border-color:#a0a0a0 #fff #fff #a0a0a0;box-shadow:inset 2px 2px #696969, inset -2px -2px #e3e3e3;"></div>
<span style="top:386px;font-size:22px;line-height:22px;font-weight:700;color:#000;letter-spacing:0.42px;white-space:pre;-webkit-text-stroke:0.12px #000;transform:scaleX(1.262);left:491px;transform-origin:0 0;">012000451</span>
<div style="left:660px;top:364px;width:51px;height:51px;box-sizing:border-box;background:#f0f0f0;border:2px solid;border-color:#fff #696969 #696969 #fff;box-shadow:inset -2px -2px #a0a0a0, inset 2px 2px #e3e3e3;"></div>
<svg style="left:671px;top:377px;overflow:visible" width="28" height="26" viewBox="0 0 28 26"><rect x="0" y="0" width="28" height="26" rx="3" fill="#000"/><rect x="2.5" y="2.5" width="6.5" height="6" fill="#70f050"/><rect x="10.5" y="2.5" width="6.5" height="6" fill="#70f050"/><rect x="18.5" y="2.5" width="6.5" height="6" fill="#70f050"/><rect x="2.5" y="10.0" width="6.5" height="6" fill="#70f050"/><rect x="10.5" y="10.0" width="6.5" height="6" fill="#70f050"/><rect x="18.5" y="10.0" width="6.5" height="6" fill="#70f050"/><rect x="2.5" y="17.5" width="6.5" height="6" fill="#70f050"/><rect x="10.5" y="17.5" width="6.5" height="6" fill="#70f050"/><rect x="18.5" y="17.5" width="6.5" height="6" fill="#70f050"/></svg>
<span style="top:348px;font-size:22px;line-height:22px;font-weight:400;color:#000;letter-spacing:1.0px;white-space:pre;-webkit-text-stroke:0.2px #000;left:739px;">F.Salida</span>
<div style="left:740px;top:377px;width:128px;height:40px;box-sizing:border-box;background:#f0f0f0;border:2px solid;border-color:#a0a0a0 #fff #fff #a0a0a0;box-shadow:inset 2px 2px #696969, inset -2px -2px #e3e3e3;"></div>
<span style="top:386px;font-size:22px;line-height:22px;font-weight:400;color:#000;letter-spacing:2.6px;white-space:pre;-webkit-text-stroke:0.2px #000;left:745px;">19/12/20</span>
<span style="top:348px;font-size:22px;line-height:22px;font-weight:400;color:#000;letter-spacing:1.6px;white-space:pre;-webkit-text-stroke:0.2px #000;left:884px;">Origen</span>
<div style="left:885px;top:377px;width:511px;height:40px;box-sizing:border-box;background:#f0f0f0;border:2px solid;border-color:#a0a0a0 #fff #fff #a0a0a0;box-shadow:inset 2px 2px #696969, inset -2px -2px #e3e3e3;"></div>
<span style="top:386px;font-size:22px;line-height:22px;font-weight:400;color:#000;letter-spacing:1.5px;white-space:pre;-webkit-text-stroke:0.2px #000;left:890px;">BIN2AL.</span>
<span style="top:428px;font-size:22px;line-height:22px;font-weight:400;color:#000;letter-spacing:1.2px;white-space:pre;-webkit-text-stroke:0.2px #000;left:739px;">F.Llegada</span>
<div style="left:740px;top:457px;width:128px;height:40px;box-sizing:border-box;background:#f0f0f0;border:2px solid;border-color:#a0a0a0 #fff #fff #a0a0a0;box-shadow:inset 2px 2px #696969, inset -2px -2px #e3e3e3;"></div>
<span style="top:466px;font-size:22px;line-height:22px;font-weight:400;color:#000;letter-spacing:2.6px;white-space:pre;-webkit-text-stroke:0.2px #000;left:745px;">23/12/20</span>
<span style="top:428px;font-size:22px;line-height:22px;font-weight:400;color:#000;letter-spacing:1.6px;white-space:pre;-webkit-text-stroke:0.2px #000;left:884px;">Destino</span>
<div style="left:885px;top:457px;width:511px;height:40px;box-sizing:border-box;background:#f0f0f0;border:2px solid;border-color:#a0a0a0 #fff #fff #a0a0a0;box-shadow:inset 2px 2px #696969, inset -2px -2px #e3e3e3;"></div>
<span style="top:466px;font-size:22px;line-height:22px;font-weight:400;color:#000;letter-spacing:1.1px;white-space:pre;-webkit-text-stroke:0.2px #000;left:890px;">HISPOL.</span>
<div style="left:1413px;top:349px;width:799px;height:203px;box-sizing:border-box;border:2px solid #a0a0a0;box-shadow:inset 2px 2px #fff, 2px 2px #fff;"></div>
<div style="left:1424px;top:338px;width:116px;height:24px;background:#f0f0f0"></div>
<span style="top:342px;font-size:22px;line-height:22px;font-weight:400;color:#000;letter-spacing:2.1px;white-space:pre;-webkit-text-stroke:0.2px #000;left:1428px;">Resumen</span>
<span style="top:422px;font-size:22px;line-height:22px;font-weight:400;color:#000;letter-spacing:1.6px;white-space:pre;-webkit-text-stroke:0.2px #000;right:1072.4px;">Palets</span>
<span style="top:470px;font-size:22px;line-height:22px;font-weight:400;color:#000;letter-spacing:1.6px;white-space:pre;-webkit-text-stroke:0.2px #000;right:1072.4px;">Bultos</span>
<span style="top:517px;font-size:22px;line-height:22px;font-weight:400;color:#000;letter-spacing:1.6px;white-space:pre;-webkit-text-stroke:0.2px #000;right:1072.4px;">Peso</span>
<span style="top:373px;font-size:22px;line-height:22px;font-weight:400;color:#000;letter-spacing:1.6px;white-space:pre;-webkit-text-stroke:0.2px #000;left:1507px;">Total</span>
<div style="left:1508px;top:403px;width:159px;height:40px;box-sizing:border-box;background:#f0f0f0;border:2px solid;border-color:#a0a0a0 #fff #fff #a0a0a0;box-shadow:inset 2px 2px #696969, inset -2px -2px #e3e3e3;"></div>
<span style="top:412px;font-size:22px;line-height:22px;font-weight:700;color:#000;letter-spacing:0.408px;white-space:pre;-webkit-text-stroke:0.12px #000;transform:scaleX(1.255);right:913.592px;transform-origin:100% 0;">24.0</span>
<div style="left:1508px;top:451px;width:159px;height:39px;box-sizing:border-box;background:#f0f0f0;border:2px solid;border-color:#a0a0a0 #fff #fff #a0a0a0;box-shadow:inset 2px 2px #696969, inset -2px -2px #e3e3e3;"></div>
<span style="top:460px;font-size:22px;line-height:22px;font-weight:700;color:#000;letter-spacing:0.408px;white-space:pre;-webkit-text-stroke:0.12px #000;transform:scaleX(1.255);right:913.592px;transform-origin:100% 0;">2,112.00</span>
<div style="left:1508px;top:499px;width:159px;height:39px;box-sizing:border-box;background:#f0f0f0;border:2px solid;border-color:#a0a0a0 #fff #fff #a0a0a0;box-shadow:inset 2px 2px #696969, inset -2px -2px #e3e3e3;"></div>
<span style="top:508px;font-size:22px;line-height:22px;font-weight:700;color:#000;letter-spacing:0.408px;white-space:pre;-webkit-text-stroke:0.12px #000;transform:scaleX(1.255);right:913.592px;transform-origin:100% 0;">21,679.22</span>
<span style="top:373px;font-size:22px;line-height:22px;font-weight:400;color:#000;letter-spacing:1.6px;white-space:pre;-webkit-text-stroke:0.2px #000;left:1683px;">Facturado</span>
<div style="left:1684px;top:403px;width:158px;height:40px;box-sizing:border-box;background:#f0f0f0;border:2px solid;border-color:#a0a0a0 #fff #fff #a0a0a0;box-shadow:inset 2px 2px #696969, inset -2px -2px #e3e3e3;"></div>
<span style="top:412px;font-size:22px;line-height:22px;font-weight:400;color:#000;letter-spacing:1.9px;white-space:pre;-webkit-text-stroke:0.2px #000;right:737.1px;">24.0</span>
<div style="left:1684px;top:451px;width:158px;height:39px;box-sizing:border-box;background:#f0f0f0;border:2px solid;border-color:#a0a0a0 #fff #fff #a0a0a0;box-shadow:inset 2px 2px #696969, inset -2px -2px #e3e3e3;"></div>
<span style="top:460px;font-size:22px;line-height:22px;font-weight:400;color:#000;letter-spacing:1.9px;white-space:pre;-webkit-text-stroke:0.2px #000;right:737.1px;">2,112.00</span>
<div style="left:1684px;top:499px;width:158px;height:39px;box-sizing:border-box;background:#f0f0f0;border:2px solid;border-color:#a0a0a0 #fff #fff #a0a0a0;box-shadow:inset 2px 2px #696969, inset -2px -2px #e3e3e3;"></div>
<span style="top:508px;font-size:22px;line-height:22px;font-weight:400;color:#000;letter-spacing:1.9px;white-space:pre;-webkit-text-stroke:0.2px #000;right:737.1px;">21,679.22</span>
<span style="top:373px;font-size:22px;line-height:22px;font-weight:400;color:#000;letter-spacing:1.6px;white-space:pre;-webkit-text-stroke:0.2px #000;left:1859px;">Liquidado</span>
<div style="left:1860px;top:403px;width:158px;height:40px;box-sizing:border-box;background:#f0f0f0;border:2px solid;border-color:#a0a0a0 #fff #fff #a0a0a0;box-shadow:inset 2px 2px #696969, inset -2px -2px #e3e3e3;"></div>
<span style="top:412px;font-size:22px;line-height:22px;font-weight:400;color:#000;letter-spacing:1.9px;white-space:pre;-webkit-text-stroke:0.2px #000;right:561.1px;">24.0</span>
<div style="left:1860px;top:451px;width:158px;height:39px;box-sizing:border-box;background:#f0f0f0;border:2px solid;border-color:#a0a0a0 #fff #fff #a0a0a0;box-shadow:inset 2px 2px #696969, inset -2px -2px #e3e3e3;"></div>
<span style="top:460px;font-size:22px;line-height:22px;font-weight:400;color:#000;letter-spacing:1.9px;white-space:pre;-webkit-text-stroke:0.2px #000;right:561.1px;">2,112.00</span>
<div style="left:1860px;top:499px;width:158px;height:39px;box-sizing:border-box;background:#f0f0f0;border:2px solid;border-color:#a0a0a0 #fff #fff #a0a0a0;box-shadow:inset 2px 2px #696969, inset -2px -2px #e3e3e3;"></div>
<span style="top:508px;font-size:22px;line-height:22px;font-weight:400;color:#000;letter-spacing:1.9px;white-space:pre;-webkit-text-stroke:0.2px #000;right:561.1px;">21,679.22</span>
<span style="top:373px;font-size:22px;line-height:22px;font-weight:400;color:#000;letter-spacing:1.6px;white-space:pre;-webkit-text-stroke:0.2px #000;left:2035px;">Anulado</span>
<div style="left:2036px;top:403px;width:158px;height:40px;box-sizing:border-box;background:#f0f0f0;border:2px solid;border-color:#a0a0a0 #fff #fff #a0a0a0;box-shadow:inset 2px 2px #696969, inset -2px -2px #e3e3e3;"></div>
<span style="top:412px;font-size:22px;line-height:22px;font-weight:400;color:#000;letter-spacing:1.9px;white-space:pre;-webkit-text-stroke:0.2px #000;right:385.1px;">0.0</span>
<div style="left:2036px;top:451px;width:158px;height:39px;box-sizing:border-box;background:#f0f0f0;border:2px solid;border-color:#a0a0a0 #fff #fff #a0a0a0;box-shadow:inset 2px 2px #696969, inset -2px -2px #e3e3e3;"></div>
<span style="top:460px;font-size:22px;line-height:22px;font-weight:400;color:#000;letter-spacing:1.9px;white-space:pre;-webkit-text-stroke:0.2px #000;right:385.1px;">0.00</span>
<div style="left:2036px;top:499px;width:158px;height:39px;box-sizing:border-box;background:#f0f0f0;border:2px solid;border-color:#a0a0a0 #fff #fff #a0a0a0;box-shadow:inset 2px 2px #696969, inset -2px -2px #e3e3e3;"></div>
<span style="top:508px;font-size:22px;line-height:22px;font-weight:400;color:#000;letter-spacing:1.9px;white-space:pre;-webkit-text-stroke:0.2px #000;right:385.1px;">0.00</span>
<span style="top:348px;font-size:22px;line-height:22px;font-weight:400;color:#000;letter-spacing:1.6px;white-space:pre;-webkit-text-stroke:0.2px #000;left:2228px;">Estado</span>
<div style="left:2229px;top:376px;width:223px;height:40px;box-sizing:border-box;background:#f0f0f0;border:2px solid;border-color:#a0a0a0 #fff #fff #a0a0a0;box-shadow:inset 2px 2px #696969, inset -2px -2px #e3e3e3;"></div>
<span style="top:385px;font-size:22px;line-height:22px;font-weight:400;color:#800000;letter-spacing:1.5px;white-space:pre;-webkit-text-stroke:0.2px #800000;left:2233px;">FINALIZADA</span>
<div style="left:473px;top:565px;width:133px;height:40px;box-sizing:border-box;background:#f4f4f4;border:2px solid;border-color:#a0a0a0 #fff #fff #a0a0a0;box-shadow:inset 2px 2px #696969, inset -2px -2px #e3e3e3;"></div>
<span style="top:575px;font-size:22px;line-height:22px;font-weight:400;color:#000;letter-spacing:1.6px;white-space:pre;-webkit-text-stroke:0.2px #000;left:486px;">Resultado</span>
<div style="left:617px;top:565px;width:2px;height:40px;background:#a0a0a0"></div>
<div style="left:619px;top:565px;width:2px;height:40px;background:#fff"></div>
<span style="top:574px;font-size:22px;line-height:22px;font-weight:400;color:#000;letter-spacing:1.7px;white-space:pre;-webkit-text-stroke:0.2px #000;left:640px;">Gastos</span>
<div style="left:739px;top:565px;width:2px;height:40px;background:#a0a0a0"></div>
<div style="left:741px;top:565px;width:2px;height:40px;background:#fff"></div>
<div style="left:478px;top:628px;width:1984px;height:819px;box-sizing:border-box;border:2px solid #a0a0a0;box-shadow:inset 2px 2px #fff, 2px 2px #fff;"></div>
<div style="left:489px;top:618px;width:493px;height:24px;background:#f0f0f0"></div>
<span style="top:621px;font-size:22px;line-height:22px;font-weight:400;color:#000;letter-spacing:1.55px;white-space:pre;-webkit-text-stroke:0.2px #000;left:492px;">Resultados por línea de expedición en EUR</span>
<div style="left:483px;top:650px;width:1979px;height:2px;background:#fff"></div>
<div style="left:483px;top:703px;width:1979px;height:3px;background:#a0a0a0"></div>
<div style="left:491px;top:655px;width:46px;height:48px;box-sizing:border-box;background:#f0f0f0;border:2px solid;border-color:#fff #696969 #696969 #fff;box-shadow:inset -2px -2px #a0a0a0, inset 2px 2px #e3e3e3;"></div>
<div style="left:540px;top:655px;width:45px;height:48px;box-sizing:border-box;background:#f0f0f0;border:2px solid;border-color:#fff #696969 #696969 #fff;box-shadow:inset -2px -2px #a0a0a0, inset 2px 2px #e3e3e3;"></div>
<div style="left:589px;top:655px;width:46px;height:48px;box-sizing:border-box;background:#f0f0f0;border:2px solid;border-color:#fff #696969 #696969 #fff;box-shadow:inset -2px -2px #a0a0a0, inset 2px 2px #e3e3e3;"></div>
<div style="left:674px;top:655px;width:44px;height:48px;box-sizing:border-box;background:#f0f0f0;border:2px solid;border-color:#fff #696969 #696969 #fff;box-shadow:inset -2px -2px #a0a0a0, inset 2px 2px #e3e3e3;"></div>
<div style="left:722px;top:655px;width:45px;height:48px;box-sizing:border-box;background:#f0f0f0;border:2px solid;border-color:#fff #696969 #696969 #fff;box-shadow:inset -2px -2px #a0a0a0, inset 2px 2px #e3e3e3;"></div>
<div style="left:770px;top:655px;width:47px;height:48px;box-sizing:border-box;background:#f0f0f0;border:2px solid;border-color:#fff #696969 #696969 #fff;box-shadow:inset -2px -2px #a0a0a0, inset 2px 2px #e3e3e3;"></div>
<div style="left:850px;top:655px;width:47px;height:48px;box-sizing:border-box;background:#f0f0f0;border:2px solid;border-color:#fff #696969 #696969 #fff;box-shadow:inset -2px -2px #a0a0a0, inset 2px 2px #e3e3e3;"></div>
<div style="left:657px;top:652px;width:2px;height:51px;background:#a0a0a0"></div>
<div style="left:659px;top:652px;width:2px;height:51px;background:#fff"></div>
<div style="left:833px;top:652px;width:2px;height:51px;background:#a0a0a0"></div>
<div style="left:835px;top:652px;width:2px;height:51px;background:#fff"></div>
<div style="left:913px;top:652px;width:2px;height:51px;background:#a0a0a0"></div>
<div style="left:915px;top:652px;width:2px;height:51px;background:#fff"></div>
<div style="left:2272px;top:653px;width:42px;height:50px;box-sizing:border-box;background:#f0f0f0;border:2px solid;border-color:#fff #696969 #696969 #fff;box-shadow:inset -2px -2px #a0a0a0, inset 2px 2px #e3e3e3;"></div>
<div style="left:2316px;top:653px;width:45px;height:50px;box-sizing:border-box;background:#f0f0f0;border:2px solid;border-color:#fff #696969 #696969 #fff;box-shadow:inset -2px -2px #a0a0a0, inset 2px 2px #e3e3e3;"></div>
<div style="left:2364px;top:653px;width:44px;height:50px;box-sizing:border-box;background:#f0f0f0;border:2px solid;border-color:#fff #696969 #696969 #fff;box-shadow:inset -2px -2px #a0a0a0, inset 2px 2px #e3e3e3;"></div>
<div style="left:2410px;top:653px;width:46px;height:50px;box-sizing:border-box;background:#f0f0f0;border:2px solid;border-color:#fff #696969 #696969 #fff;box-shadow:inset -2px -2px #a0a0a0, inset 2px 2px #e3e3e3;"></div>
<svg style="left:500px;top:663px;overflow:visible" width="33" height="33" viewBox="0 0 33 33"><polygon points="9,1 25,1 32,8 32,32 9,32" fill="#60d040" stroke="#000" stroke-width="2"/><g fill="#000"><rect x="13" y="12" width="3" height="2.5"/><rect x="19" y="12" width="3" height="2.5"/><rect x="25" y="18" width="3" height="2.5"/><rect x="19" y="24" width="3" height="2.5"/><rect x="25" y="26" width="3" height="2.5"/></g><path d="M1,20 C3,16 10,15 14,17 L20,19 L19,24 L14,24 L14,30 L4,30 C2,28 1,25 1,20 Z" fill="#ffffa0" stroke="#000" stroke-width="1.8"/><line x1="4" y1="3" x2="22" y2="22" stroke="#000" stroke-width="2.2"/><line x1="5" y1="4" x2="21" y2="21" stroke="#e0a020" stroke-width="1"/></svg>
<svg style="left:552px;top:665px;overflow:visible" width="24" height="29" viewBox="0 0 24 29"><rect x="1" y="1" width="22" height="27" fill="#f0f0f0" stroke="#888" stroke-width="2"/><rect x="4" y="6" width="16" height="15" fill="#1a28e8"/><rect x="4" y="9" width="16" height="1.2" fill="#fff"/><rect x="10" y="13" width="4" height="3" fill="#fff"/><rect x="12" y="23" width="8" height="2.5" fill="#1a28e8"/></svg>
<svg style="left:601px;top:665px;overflow:visible" width="24" height="29" viewBox="0 0 24 29"><rect x="1" y="1" width="22" height="27" fill="#f0f0f0" stroke="#888" stroke-width="2"/><rect x="4" y="6" width="16" height="15" fill="#8b1a1a"/><rect x="4" y="9" width="16" height="1.2" fill="#fff"/><rect x="10" y="13" width="4" height="3" fill="#fff"/><rect x="12" y="23" width="8" height="2.5" fill="#8b1a1a"/></svg>
<svg style="left:680px;top:666px;overflow:visible" width="29" height="28" viewBox="0 0 29 28"><rect x="3" y="3" width="22" height="21" fill="none" stroke="#888" stroke-width="1.6"/><rect x="8" y="8" width="10" height="9" fill="none" stroke="#999" stroke-width="1.6"/><rect x="11" y="11" width="10" height="9" fill="none" stroke="#999" stroke-width="1.6"/><g fill="none" stroke="#1414e6" stroke-width="1.8"><rect x="0.9" y="0.9" width="4.2" height="4.2"/><rect x="22.9" y="0.9" width="4.2" height="4.2"/><rect x="0.9" y="21.9" width="4.2" height="4.2"/><rect x="22.9" y="21.9" width="4.2" height="4.2"/></g></svg>
<svg style="left:728px;top:666px;overflow:visible" width="29" height="28" viewBox="0 0 29 28"><rect x="3" y="3" width="22" height="21" fill="none" stroke="#888" stroke-width="1.6"/><rect x="8" y="8" width="10" height="9" fill="none" stroke="#999" stroke-width="1.6"/><rect x="11" y="11" width="10" height="9" fill="none" stroke="#999" stroke-width="1.6"/><g fill="none" stroke="#a020a0" stroke-width="1.8"><rect x="0.9" y="0.9" width="4.2" height="4.2"/><rect x="22.9" y="0.9" width="4.2" height="4.2"/><rect x="0.9" y="21.9" width="4.2" height="4.2"/><rect x="22.9" y="21.9" width="4.2" height="4.2"/></g></svg>
<svg style="left:776px;top:666px;overflow:visible" width="29" height="28" viewBox="0 0 29 28"><rect x="3" y="3" width="22" height="21" fill="none" stroke="#888" stroke-width="1.6"/><rect x="8" y="8" width="10" height="9" fill="none" stroke="#999" stroke-width="1.6"/><rect x="11" y="11" width="10" height="9" fill="none" stroke="#999" stroke-width="1.6"/><g fill="none" stroke="#2a8a2a" stroke-width="1.8"><rect x="0.9" y="0.9" width="4.2" height="4.2"/><rect x="22.9" y="0.9" width="4.2" height="4.2"/><rect x="0.9" y="21.9" width="4.2" height="4.2"/><rect x="22.9" y="21.9" width="4.2" height="4.2"/></g></svg>
<svg style="left:858px;top:672px;overflow:visible" width="33" height="24" viewBox="0 0 33 24"><g fill="none" stroke="#8a8a8a" stroke-width="1.8"><rect x="1" y="1" width="19" height="17"/><path d="M20,7 L26,7 L31,13 L31,18 L20,18"/><circle cx="7" cy="20" r="3" fill="#f0f0f0"/><circle cx="25" cy="20" r="3" fill="#f0f0f0"/></g></svg>
<svg style="left:2280px;top:669px;overflow:visible" width="27" height="20" viewBox="0 0 27 20"><g fill="none" stroke="#b0b0b0" stroke-width="1.6"><line x1="2" y1="1" x2="2" y2="19"/><polygon points="24,1 5,10 24,19"/></g></svg>
<svg style="left:2328px;top:669px;overflow:visible" width="22" height="20" viewBox="0 0 22 20"><polygon points="20,1 2,10 20,19" fill="none" stroke="#b0b0b0" stroke-width="1.6"/></svg>
<svg style="left:2379px;top:672px;overflow:visible" width="17" height="15" viewBox="0 0 17 15"><polygon points="0,0 16,7.2 0,14.5" fill="#000"/></svg>
<svg style="left:2423px;top:672px;overflow:visible" width="22" height="15" viewBox="0 0 22 15"><polygon points="0,0 15,7.2 0,14.5" fill="#000"/><rect x="16" y="0" width="3.6" height="14.5" fill="#000"/></svg>
<div style="left:477px;top:706px;width:1986px;height:742px;box-sizing:border-box;background:#fff;border:2px solid #a0a0a0;box-shadow:2px 2px #fff;"></div>
<div style="left:480px;top:709px;width:22px;height:359px;background:#c4c4c4"></div>
<div style="left:502px;top:709px;width:2px;height:359px;background:#000"></div>
<div style="left:504px;top:709px;width:1924px;height:35px;background:#c4c4c4"></div>
<div style="left:480px;top:742px;width:1948px;height:2px;background:#000"></div>
<div style="left:480px;top:709px;width:1948px;height:2px;background:#fff"></div>
<div style="left:562px;top:709px;width:2px;height:35px;background:#000"></div>
<div style="left:564px;top:711px;width:2px;height:31px;background:#fff"></div>
<div style="left:663px;top:709px;width:2px;height:35px;background:#000"></div>
<div style="left:665px;top:711px;width:2px;height:31px;background:#fff"></div>
<div style="left:766px;top:709px;width:2px;height:35px;background:#000"></div>
<div style="left:768px;top:711px;width:2px;height:31px;background:#fff"></div>
<div style="left:899px;top:709px;width:2px;height:35px;background:#000"></div>
<div style="left:901px;top:711px;width:2px;height:31px;background:#fff"></div>
<div style="left:1053px;top:709px;width:2px;height:35px;background:#000"></div>
<div style="left:1055px;top:711px;width:2px;height:31px;background:#fff"></div>
<div style="left:1199px;top:709px;width:2px;height:35px;background:#000"></div>
<div style="left:1201px;top:711px;width:2px;height:31px;background:#fff"></div>
<div style="left:1361px;top:709px;width:2px;height:35px;background:#000"></div>
<div style="left:1363px;top:711px;width:2px;height:31px;background:#fff"></div>
<div style="left:1549px;top:709px;width:2px;height:35px;background:#000"></div>
<div style="left:1551px;top:711px;width:2px;height:31px;background:#fff"></div>
<div style="left:1719px;top:709px;width:2px;height:35px;background:#000"></div>
<div style="left:1721px;top:711px;width:2px;height:31px;background:#fff"></div>
<div style="left:1893px;top:709px;width:2px;height:35px;background:#000"></div>
<div style="left:1895px;top:711px;width:2px;height:31px;background:#fff"></div>
<div style="left:2061px;top:709px;width:2px;height:35px;background:#000"></div>
<div style="left:2063px;top:711px;width:2px;height:31px;background:#fff"></div>
<div style="left:2166px;top:709px;width:2px;height:35px;background:#000"></div>
<div style="left:2168px;top:711px;width:2px;height:31px;background:#fff"></div>
<div style="left:2349px;top:709px;width:2px;height:35px;background:#000"></div>
<div style="left:2351px;top:711px;width:2px;height:31px;background:#fff"></div>
<div style="left:504px;top:711px;width:2px;height:31px;background:#fff"></div>
<div style="left:504px;top:709px;width:1924px;height:35px;overflow:hidden">
<div style="left:-504px;top:-709px;width:2574px;height:1660px">
<span style="top:716px;font-size:22px;line-height:22px;font-weight:400;color:#000;letter-spacing:1.6px;white-space:pre;-webkit-text-stroke:0.2px #000;left:508px;">Lín.</span>
<span style="top:716px;font-size:22px;line-height:22px;font-weight:400;color:#000;letter-spacing:1.6px;white-space:pre;-webkit-text-stroke:0.2px #000;left:569px;">Prov.</span>
<span style="top:716px;font-size:22px;line-height:22px;font-weight:400;color:#000;letter-spacing:1.6px;white-space:pre;-webkit-text-stroke:0.2px #000;left:670px;">Cliente</span>
<span style="top:716px;font-size:22px;line-height:22px;font-weight:400;color:#000;letter-spacing:1.6px;white-space:pre;-webkit-text-stroke:0.2px #000;left:772px;">Artículo</span>
<span style="top:716px;font-size:22px;line-height:22px;font-weight:400;color:#000;letter-spacing:1.6px;white-space:pre;-webkit-text-stroke:0.2px #000;left:906px;">Fac.Exp.</span>
<span style="top:716px;font-size:22px;line-height:22px;font-weight:400;color:#000;letter-spacing:1.6px;white-space:pre;-webkit-text-stroke:0.2px #000;left:1059px;">Fac.Dir.</span>
<span style="top:716px;font-size:22px;line-height:22px;font-weight:400;color:#2020e8;letter-spacing:1.6px;white-space:pre;-webkit-text-stroke:0.2px #2020e8;left:1206px;">Total Fac.</span>
<span style="top:716px;font-size:22px;line-height:22px;font-weight:400;color:#8a1f1f;letter-spacing:1.6px;white-space:pre;-webkit-text-stroke:0.2px #8a1f1f;left:1367px;">Fletes</span>
<span style="top:716px;font-size:22px;line-height:22px;font-weight:400;color:#8a1f1f;letter-spacing:1.6px;white-space:pre;-webkit-text-stroke:0.2px #8a1f1f;left:1556px;">Gastos</span>
<span style="top:716px;font-size:22px;line-height:22px;font-weight:400;color:#9a2aa6;letter-spacing:1.6px;white-space:pre;-webkit-text-stroke:0.2px #9a2aa6;left:1726px;">Cta.Vta.</span>
<span style="top:716px;font-size:22px;line-height:22px;font-weight:400;color:#2020e8;letter-spacing:1.6px;white-space:pre;-webkit-text-stroke:0.2px #2020e8;left:1899px;">Comisión</span>
<span style="top:716px;font-size:22px;line-height:22px;font-weight:400;color:#000;letter-spacing:1.6px;white-space:pre;-webkit-text-stroke:0.2px #000;left:2068px;">%Com.</span>
<span style="top:716px;font-size:22px;line-height:22px;font-weight:400;color:#000;letter-spacing:1.6px;white-space:pre;-webkit-text-stroke:0.2px #000;left:2173px;">Resultado</span>
<span style="top:716px;font-size:22px;line-height:22px;font-weight:400;color:#000;letter-spacing:1.6px;white-space:pre;-webkit-text-stroke:0.2px #000;left:2356px;">%Res.</span>
</div></div>
<div style="left:504px;top:744px;width:1924px;height:324px;overflow:hidden">
<div style="left:-504px;top:-744px;width:2574px;height:1660px">
<div style="left:504px;top:744px;width:1924px;height:34px;background:#5797f7"></div>
<div style="left:504px;top:778px;width:1924px;height:2px;background:#d0d0d0"></div>
<div style="left:562px;top:744px;width:2px;height:36px;background:#d0d0d0"></div>
<div style="left:663px;top:744px;width:2px;height:36px;background:#d0d0d0"></div>
<div style="left:766px;top:744px;width:2px;height:36px;background:#d0d0d0"></div>
<div style="left:899px;top:744px;width:2px;height:36px;background:#d0d0d0"></div>
<div style="left:1053px;top:744px;width:2px;height:36px;background:#d0d0d0"></div>
<div style="left:1199px;top:744px;width:2px;height:36px;background:#d0d0d0"></div>
<div style="left:1361px;top:744px;width:2px;height:36px;background:#d0d0d0"></div>
<div style="left:1549px;top:744px;width:2px;height:36px;background:#d0d0d0"></div>
<div style="left:1719px;top:744px;width:2px;height:36px;background:#d0d0d0"></div>
<div style="left:1893px;top:744px;width:2px;height:36px;background:#d0d0d0"></div>
<div style="left:2061px;top:744px;width:2px;height:36px;background:#d0d0d0"></div>
<div style="left:2166px;top:744px;width:2px;height:36px;background:#d0d0d0"></div>
<div style="left:2349px;top:744px;width:2px;height:36px;background:#d0d0d0"></div>
<span style="top:752px;font-size:22px;line-height:22px;font-weight:400;color:#fff;letter-spacing:1.3px;white-space:pre;-webkit-text-stroke:0.2px #fff;left:509px;">001</span>
<span style="top:752px;font-size:22px;line-height:22px;font-weight:400;color:#fff;letter-spacing:1.6px;white-space:pre;-webkit-text-stroke:0.2px #fff;left:569px;">BIN2AL</span>
<span style="top:752px;font-size:22px;line-height:22px;font-weight:400;color:#fff;letter-spacing:1.05px;white-space:pre;-webkit-text-stroke:0.2px #fff;left:671px;">HISPOL</span>
<span style="top:752px;font-size:22px;line-height:22px;font-weight:400;color:#fff;letter-spacing:1.1px;white-space:pre;-webkit-text-stroke:0.2px #fff;left:773px;">CLCNXX</span>
<span style="top:752px;font-size:22px;line-height:22px;font-weight:400;color:#fff;letter-spacing:1.9px;white-space:pre;-webkit-text-stroke:0.2px #fff;right:1523.1px;">3,021.95</span>
<span style="top:752px;font-size:22px;line-height:22px;font-weight:400;color:#fff;letter-spacing:1.9px;white-space:pre;-webkit-text-stroke:0.2px #fff;right:1378.1px;">0.00</span>
<span style="top:752px;font-size:22px;line-height:22px;font-weight:700;color:#fff;letter-spacing:0.408px;white-space:pre;-webkit-text-stroke:0.12px #fff;transform:scaleX(1.255);right:1217.592px;transform-origin:100% 0;">3,021.95</span>
<span style="top:752px;font-size:22px;line-height:22px;font-weight:400;color:#fff;letter-spacing:1.9px;white-space:pre;-webkit-text-stroke:0.2px #fff;right:1028.1px;">0.00</span>
<span style="top:752px;font-size:22px;line-height:22px;font-weight:400;color:#fff;letter-spacing:1.9px;white-space:pre;-webkit-text-stroke:0.2px #fff;right:858.1px;">0.00</span>
<span style="top:752px;font-size:22px;line-height:22px;font-weight:400;color:#fff;letter-spacing:1.9px;white-space:pre;-webkit-text-stroke:0.2px #fff;right:685.1px;">3,021.95</span>
<span style="top:752px;font-size:22px;line-height:22px;font-weight:400;color:#fff;letter-spacing:1.9px;white-space:pre;-webkit-text-stroke:0.2px #fff;right:516.1px;">181.32</span>
<span style="top:752px;font-size:22px;line-height:22px;font-weight:400;color:#fff;letter-spacing:1.9px;white-space:pre;-webkit-text-stroke:0.2px #fff;right:410.1px;">6.00</span>
<span style="top:752px;font-size:22px;line-height:22px;font-weight:700;color:#fff;letter-spacing:0.408px;white-space:pre;-webkit-text-stroke:0.12px #fff;transform:scaleX(1.255);right:229.592px;transform-origin:100% 0;">181.32</span>
<span style="top:752px;font-size:22px;line-height:22px;font-weight:400;color:#fff;letter-spacing:1.9px;white-space:pre;-webkit-text-stroke:0.2px #fff;right:127.1px;">6.00</span>
<div style="left:504px;top:780px;width:1924px;height:36px;background:#fff"></div>
<div style="left:504px;top:780px;width:58px;height:36px;background:#fffee6"></div>
<div style="left:767px;top:780px;width:133px;height:36px;background:#fffee6"></div>
<div style="left:2168px;top:780px;width:181px;height:36px;background:#c6dbc4"></div>
<div style="left:504px;top:814px;width:1924px;height:2px;background:#d0d0d0"></div>
<div style="left:562px;top:780px;width:2px;height:36px;background:#d0d0d0"></div>
<div style="left:663px;top:780px;width:2px;height:36px;background:#d0d0d0"></div>
<div style="left:766px;top:780px;width:2px;height:36px;background:#d0d0d0"></div>
<div style="left:899px;top:780px;width:2px;height:36px;background:#d0d0d0"></div>
<div style="left:1053px;top:780px;width:2px;height:36px;background:#d0d0d0"></div>
<div style="left:1199px;top:780px;width:2px;height:36px;background:#d0d0d0"></div>
<div style="left:1361px;top:780px;width:2px;height:36px;background:#d0d0d0"></div>
<div style="left:1549px;top:780px;width:2px;height:36px;background:#d0d0d0"></div>
<div style="left:1719px;top:780px;width:2px;height:36px;background:#d0d0d0"></div>
<div style="left:1893px;top:780px;width:2px;height:36px;background:#d0d0d0"></div>
<div style="left:2061px;top:780px;width:2px;height:36px;background:#d0d0d0"></div>
<div style="left:2166px;top:780px;width:2px;height:36px;background:#d0d0d0"></div>
<div style="left:2349px;top:780px;width:2px;height:36px;background:#d0d0d0"></div>
<span style="top:788px;font-size:22px;line-height:22px;font-weight:400;color:#000;letter-spacing:1.3px;white-space:pre;-webkit-text-stroke:0.2px #000;left:509px;">002</span>
<span style="top:788px;font-size:22px;line-height:22px;font-weight:400;color:#800000;letter-spacing:1.6px;white-space:pre;-webkit-text-stroke:0.2px #800000;left:569px;">BIN2AL</span>
<span style="top:788px;font-size:22px;line-height:22px;font-weight:400;color:#0000f0;letter-spacing:1.05px;white-space:pre;-webkit-text-stroke:0.2px #0000f0;left:671px;">HISPOL</span>
<span style="top:788px;font-size:22px;line-height:22px;font-weight:400;color:#1e7a1e;letter-spacing:1.1px;white-space:pre;-webkit-text-stroke:0.2px #1e7a1e;left:773px;">CLCNXX</span>
<span style="top:788px;font-size:22px;line-height:22px;font-weight:400;color:#000;letter-spacing:1.9px;white-space:pre;-webkit-text-stroke:0.2px #000;right:1523.1px;">3,505.35</span>
<span style="top:788px;font-size:22px;line-height:22px;font-weight:400;color:#000;letter-spacing:1.9px;white-space:pre;-webkit-text-stroke:0.2px #000;right:1378.1px;">0.00</span>
<span style="top:788px;font-size:22px;line-height:22px;font-weight:700;color:#000;letter-spacing:0.408px;white-space:pre;-webkit-text-stroke:0.12px #000;transform:scaleX(1.255);right:1217.592px;transform-origin:100% 0;">3,505.35</span>
<span style="top:788px;font-size:22px;line-height:22px;font-weight:400;color:#000;letter-spacing:1.9px;white-space:pre;-webkit-text-stroke:0.2px #000;right:1028.1px;">0.00</span>
<span style="top:788px;font-size:22px;line-height:22px;font-weight:400;color:#000;letter-spacing:1.9px;white-space:pre;-webkit-text-stroke:0.2px #000;right:858.1px;">0.00</span>
<span style="top:788px;font-size:22px;line-height:22px;font-weight:400;color:#000;letter-spacing:1.9px;white-space:pre;-webkit-text-stroke:0.2px #000;right:685.1px;">3,505.35</span>
<span style="top:788px;font-size:22px;line-height:22px;font-weight:400;color:#000;letter-spacing:1.9px;white-space:pre;-webkit-text-stroke:0.2px #000;right:516.1px;">210.32</span>
<span style="top:788px;font-size:22px;line-height:22px;font-weight:400;color:#000;letter-spacing:1.9px;white-space:pre;-webkit-text-stroke:0.2px #000;right:410.1px;">6.00</span>
<span style="top:788px;font-size:22px;line-height:22px;font-weight:700;color:#000;letter-spacing:0.408px;white-space:pre;-webkit-text-stroke:0.12px #000;transform:scaleX(1.255);right:229.592px;transform-origin:100% 0;">210.32</span>
<span style="top:788px;font-size:22px;line-height:22px;font-weight:400;color:#000;letter-spacing:1.9px;white-space:pre;-webkit-text-stroke:0.2px #000;right:127.1px;">6.00</span>
<div style="left:504px;top:816px;width:1924px;height:36px;background:#fff"></div>
<div style="left:504px;top:816px;width:58px;height:36px;background:#fffee6"></div>
<div style="left:767px;top:816px;width:133px;height:36px;background:#fffee6"></div>
<div style="left:2168px;top:816px;width:181px;height:36px;background:#c6dbc4"></div>
<div style="left:504px;top:850px;width:1924px;height:2px;background:#d0d0d0"></div>
<div style="left:562px;top:816px;width:2px;height:36px;background:#d0d0d0"></div>
<div style="left:663px;top:816px;width:2px;height:36px;background:#d0d0d0"></div>
<div style="left:766px;top:816px;width:2px;height:36px;background:#d0d0d0"></div>
<div style="left:899px;top:816px;width:2px;height:36px;background:#d0d0d0"></div>
<div style="left:1053px;top:816px;width:2px;height:36px;background:#d0d0d0"></div>
<div style="left:1199px;top:816px;width:2px;height:36px;background:#d0d0d0"></div>
<div style="left:1361px;top:816px;width:2px;height:36px;background:#d0d0d0"></div>
<div style="left:1549px;top:816px;width:2px;height:36px;background:#d0d0d0"></div>
<div style="left:1719px;top:816px;width:2px;height:36px;background:#d0d0d0"></div>
<div style="left:1893px;top:816px;width:2px;height:36px;background:#d0d0d0"></div>
<div style="left:2061px;top:816px;width:2px;height:36px;background:#d0d0d0"></div>
<div style="left:2166px;top:816px;width:2px;height:36px;background:#d0d0d0"></div>
<div style="left:2349px;top:816px;width:2px;height:36px;background:#d0d0d0"></div>
<span style="top:824px;font-size:22px;line-height:22px;font-weight:400;color:#000;letter-spacing:1.3px;white-space:pre;-webkit-text-stroke:0.2px #000;left:509px;">003</span>
<span style="top:824px;font-size:22px;line-height:22px;font-weight:400;color:#800000;letter-spacing:1.6px;white-space:pre;-webkit-text-stroke:0.2px #800000;left:569px;">BIN2AL</span>
<span style="top:824px;font-size:22px;line-height:22px;font-weight:400;color:#0000f0;letter-spacing:1.05px;white-space:pre;-webkit-text-stroke:0.2px #0000f0;left:671px;">HISPOL</span>
<span style="top:824px;font-size:22px;line-height:22px;font-weight:400;color:#1e7a1e;letter-spacing:1.1px;white-space:pre;-webkit-text-stroke:0.2px #1e7a1e;left:773px;">CLCNXX</span>
<span style="top:824px;font-size:22px;line-height:22px;font-weight:400;color:#000;letter-spacing:1.9px;white-space:pre;-webkit-text-stroke:0.2px #000;right:1523.1px;">1,848.00</span>
<span style="top:824px;font-size:22px;line-height:22px;font-weight:400;color:#000;letter-spacing:1.9px;white-space:pre;-webkit-text-stroke:0.2px #000;right:1378.1px;">0.00</span>
<span style="top:824px;font-size:22px;line-height:22px;font-weight:700;color:#000;letter-spacing:0.408px;white-space:pre;-webkit-text-stroke:0.12px #000;transform:scaleX(1.255);right:1217.592px;transform-origin:100% 0;">1,848.00</span>
<span style="top:824px;font-size:22px;line-height:22px;font-weight:400;color:#000;letter-spacing:1.9px;white-space:pre;-webkit-text-stroke:0.2px #000;right:1028.1px;">0.00</span>
<span style="top:824px;font-size:22px;line-height:22px;font-weight:400;color:#000;letter-spacing:1.9px;white-space:pre;-webkit-text-stroke:0.2px #000;right:858.1px;">0.00</span>
<span style="top:824px;font-size:22px;line-height:22px;font-weight:400;color:#000;letter-spacing:1.9px;white-space:pre;-webkit-text-stroke:0.2px #000;right:685.1px;">1,848.00</span>
<span style="top:824px;font-size:22px;line-height:22px;font-weight:400;color:#000;letter-spacing:1.9px;white-space:pre;-webkit-text-stroke:0.2px #000;right:516.1px;">110.88</span>
<span style="top:824px;font-size:22px;line-height:22px;font-weight:400;color:#000;letter-spacing:1.9px;white-space:pre;-webkit-text-stroke:0.2px #000;right:410.1px;">6.00</span>
<span style="top:824px;font-size:22px;line-height:22px;font-weight:700;color:#000;letter-spacing:0.408px;white-space:pre;-webkit-text-stroke:0.12px #000;transform:scaleX(1.255);right:229.592px;transform-origin:100% 0;">110.88</span>
<span style="top:824px;font-size:22px;line-height:22px;font-weight:400;color:#000;letter-spacing:1.9px;white-space:pre;-webkit-text-stroke:0.2px #000;right:127.1px;">6.00</span>
<div style="left:504px;top:852px;width:1924px;height:36px;background:#fff"></div>
<div style="left:504px;top:852px;width:58px;height:36px;background:#fffee6"></div>
<div style="left:767px;top:852px;width:133px;height:36px;background:#fffee6"></div>
<div style="left:2168px;top:852px;width:181px;height:36px;background:#c6dbc4"></div>
<div style="left:504px;top:886px;width:1924px;height:2px;background:#d0d0d0"></div>
<div style="left:562px;top:852px;width:2px;height:36px;background:#d0d0d0"></div>
<div style="left:663px;top:852px;width:2px;height:36px;background:#d0d0d0"></div>
<div style="left:766px;top:852px;width:2px;height:36px;background:#d0d0d0"></div>
<div style="left:899px;top:852px;width:2px;height:36px;background:#d0d0d0"></div>
<div style="left:1053px;top:852px;width:2px;height:36px;background:#d0d0d0"></div>
<div style="left:1199px;top:852px;width:2px;height:36px;background:#d0d0d0"></div>
<div style="left:1361px;top:852px;width:2px;height:36px;background:#d0d0d0"></div>
<div style="left:1549px;top:852px;width:2px;height:36px;background:#d0d0d0"></div>
<div style="left:1719px;top:852px;width:2px;height:36px;background:#d0d0d0"></div>
<div style="left:1893px;top:852px;width:2px;height:36px;background:#d0d0d0"></div>
<div style="left:2061px;top:852px;width:2px;height:36px;background:#d0d0d0"></div>
<div style="left:2166px;top:852px;width:2px;height:36px;background:#d0d0d0"></div>
<div style="left:2349px;top:852px;width:2px;height:36px;background:#d0d0d0"></div>
<span style="top:860px;font-size:22px;line-height:22px;font-weight:400;color:#000;letter-spacing:1.3px;white-space:pre;-webkit-text-stroke:0.2px #000;left:509px;">004</span>
<span style="top:860px;font-size:22px;line-height:22px;font-weight:400;color:#800000;letter-spacing:1.6px;white-space:pre;-webkit-text-stroke:0.2px #800000;left:569px;">BIN2AL</span>
<span style="top:860px;font-size:22px;line-height:22px;font-weight:400;color:#0000f0;letter-spacing:1.05px;white-space:pre;-webkit-text-stroke:0.2px #0000f0;left:671px;">HISPOL</span>
<span style="top:860px;font-size:22px;line-height:22px;font-weight:400;color:#1e7a1e;letter-spacing:1.1px;white-space:pre;-webkit-text-stroke:0.2px #1e7a1e;left:773px;">CLCNXX</span>
<span style="top:860px;font-size:22px;line-height:22px;font-weight:400;color:#000;letter-spacing:1.9px;white-space:pre;-webkit-text-stroke:0.2px #000;right:1523.1px;">5,852.00</span>
<span style="top:860px;font-size:22px;line-height:22px;font-weight:400;color:#000;letter-spacing:1.9px;white-space:pre;-webkit-text-stroke:0.2px #000;right:1378.1px;">0.00</span>
<span style="top:860px;font-size:22px;line-height:22px;font-weight:700;color:#000;letter-spacing:0.408px;white-space:pre;-webkit-text-stroke:0.12px #000;transform:scaleX(1.255);right:1217.592px;transform-origin:100% 0;">5,852.00</span>
<span style="top:860px;font-size:22px;line-height:22px;font-weight:400;color:#000;letter-spacing:1.9px;white-space:pre;-webkit-text-stroke:0.2px #000;right:1028.1px;">0.00</span>
<span style="top:860px;font-size:22px;line-height:22px;font-weight:400;color:#000;letter-spacing:1.9px;white-space:pre;-webkit-text-stroke:0.2px #000;right:858.1px;">0.00</span>
<span style="top:860px;font-size:22px;line-height:22px;font-weight:400;color:#000;letter-spacing:1.9px;white-space:pre;-webkit-text-stroke:0.2px #000;right:685.1px;">5,852.00</span>
<span style="top:860px;font-size:22px;line-height:22px;font-weight:400;color:#000;letter-spacing:1.9px;white-space:pre;-webkit-text-stroke:0.2px #000;right:516.1px;">351.12</span>
<span style="top:860px;font-size:22px;line-height:22px;font-weight:400;color:#000;letter-spacing:1.9px;white-space:pre;-webkit-text-stroke:0.2px #000;right:410.1px;">6.00</span>
<span style="top:860px;font-size:22px;line-height:22px;font-weight:700;color:#000;letter-spacing:0.408px;white-space:pre;-webkit-text-stroke:0.12px #000;transform:scaleX(1.255);right:229.592px;transform-origin:100% 0;">351.12</span>
<span style="top:860px;font-size:22px;line-height:22px;font-weight:400;color:#000;letter-spacing:1.9px;white-space:pre;-webkit-text-stroke:0.2px #000;right:127.1px;">6.00</span>
<div style="left:504px;top:888px;width:1924px;height:36px;background:#fff"></div>
<div style="left:504px;top:888px;width:58px;height:36px;background:#fffee6"></div>
<div style="left:767px;top:888px;width:133px;height:36px;background:#fffee6"></div>
<div style="left:2168px;top:888px;width:181px;height:36px;background:#c6dbc4"></div>
<div style="left:504px;top:922px;width:1924px;height:2px;background:#d0d0d0"></div>
<div style="left:562px;top:888px;width:2px;height:36px;background:#d0d0d0"></div>
<div style="left:663px;top:888px;width:2px;height:36px;background:#d0d0d0"></div>
<div style="left:766px;top:888px;width:2px;height:36px;background:#d0d0d0"></div>
<div style="left:899px;top:888px;width:2px;height:36px;background:#d0d0d0"></div>
<div style="left:1053px;top:888px;width:2px;height:36px;background:#d0d0d0"></div>
<div style="left:1199px;top:888px;width:2px;height:36px;background:#d0d0d0"></div>
<div style="left:1361px;top:888px;width:2px;height:36px;background:#d0d0d0"></div>
<div style="left:1549px;top:888px;width:2px;height:36px;background:#d0d0d0"></div>
<div style="left:1719px;top:888px;width:2px;height:36px;background:#d0d0d0"></div>
<div style="left:1893px;top:888px;width:2px;height:36px;background:#d0d0d0"></div>
<div style="left:2061px;top:888px;width:2px;height:36px;background:#d0d0d0"></div>
<div style="left:2166px;top:888px;width:2px;height:36px;background:#d0d0d0"></div>
<div style="left:2349px;top:888px;width:2px;height:36px;background:#d0d0d0"></div>
<span style="top:896px;font-size:22px;line-height:22px;font-weight:400;color:#000;letter-spacing:1.3px;white-space:pre;-webkit-text-stroke:0.2px #000;left:509px;">005</span>
<span style="top:896px;font-size:22px;line-height:22px;font-weight:400;color:#800000;letter-spacing:1.6px;white-space:pre;-webkit-text-stroke:0.2px #800000;left:569px;">BIN2AL</span>
<span style="top:896px;font-size:22px;line-height:22px;font-weight:400;color:#0000f0;letter-spacing:1.05px;white-space:pre;-webkit-text-stroke:0.2px #0000f0;left:671px;">HISPOL</span>
<span style="top:896px;font-size:22px;line-height:22px;font-weight:400;color:#1e7a1e;letter-spacing:1.1px;white-space:pre;-webkit-text-stroke:0.2px #1e7a1e;left:773px;">CLCNXX</span>
<span style="top:896px;font-size:22px;line-height:22px;font-weight:400;color:#000;letter-spacing:1.9px;white-space:pre;-webkit-text-stroke:0.2px #000;right:1523.1px;">3,300.00</span>
<span style="top:896px;font-size:22px;line-height:22px;font-weight:400;color:#000;letter-spacing:1.9px;white-space:pre;-webkit-text-stroke:0.2px #000;right:1378.1px;">0.00</span>
<span style="top:896px;font-size:22px;line-height:22px;font-weight:700;color:#000;letter-spacing:0.408px;white-space:pre;-webkit-text-stroke:0.12px #000;transform:scaleX(1.255);right:1217.592px;transform-origin:100% 0;">3,300.00</span>
<span style="top:896px;font-size:22px;line-height:22px;font-weight:400;color:#000;letter-spacing:1.9px;white-space:pre;-webkit-text-stroke:0.2px #000;right:1028.1px;">0.00</span>
<span style="top:896px;font-size:22px;line-height:22px;font-weight:400;color:#000;letter-spacing:1.9px;white-space:pre;-webkit-text-stroke:0.2px #000;right:858.1px;">0.00</span>
<span style="top:896px;font-size:22px;line-height:22px;font-weight:400;color:#000;letter-spacing:1.9px;white-space:pre;-webkit-text-stroke:0.2px #000;right:685.1px;">3,300.00</span>
<span style="top:896px;font-size:22px;line-height:22px;font-weight:400;color:#000;letter-spacing:1.9px;white-space:pre;-webkit-text-stroke:0.2px #000;right:516.1px;">198.00</span>
<span style="top:896px;font-size:22px;line-height:22px;font-weight:400;color:#000;letter-spacing:1.9px;white-space:pre;-webkit-text-stroke:0.2px #000;right:410.1px;">6.00</span>
<span style="top:896px;font-size:22px;line-height:22px;font-weight:700;color:#000;letter-spacing:0.408px;white-space:pre;-webkit-text-stroke:0.12px #000;transform:scaleX(1.255);right:229.592px;transform-origin:100% 0;">198.00</span>
<span style="top:896px;font-size:22px;line-height:22px;font-weight:400;color:#000;letter-spacing:1.9px;white-space:pre;-webkit-text-stroke:0.2px #000;right:127.1px;">6.00</span>
<div style="left:504px;top:924px;width:1924px;height:36px;background:#fff"></div>
<div style="left:504px;top:924px;width:58px;height:36px;background:#fffee6"></div>
<div style="left:767px;top:924px;width:133px;height:36px;background:#fffee6"></div>
<div style="left:2168px;top:924px;width:181px;height:36px;background:#c6dbc4"></div>
<div style="left:504px;top:958px;width:1924px;height:2px;background:#d0d0d0"></div>
<div style="left:562px;top:924px;width:2px;height:36px;background:#d0d0d0"></div>
<div style="left:663px;top:924px;width:2px;height:36px;background:#d0d0d0"></div>
<div style="left:766px;top:924px;width:2px;height:36px;background:#d0d0d0"></div>
<div style="left:899px;top:924px;width:2px;height:36px;background:#d0d0d0"></div>
<div style="left:1053px;top:924px;width:2px;height:36px;background:#d0d0d0"></div>
<div style="left:1199px;top:924px;width:2px;height:36px;background:#d0d0d0"></div>
<div style="left:1361px;top:924px;width:2px;height:36px;background:#d0d0d0"></div>
<div style="left:1549px;top:924px;width:2px;height:36px;background:#d0d0d0"></div>
<div style="left:1719px;top:924px;width:2px;height:36px;background:#d0d0d0"></div>
<div style="left:1893px;top:924px;width:2px;height:36px;background:#d0d0d0"></div>
<div style="left:2061px;top:924px;width:2px;height:36px;background:#d0d0d0"></div>
<div style="left:2166px;top:924px;width:2px;height:36px;background:#d0d0d0"></div>
<div style="left:2349px;top:924px;width:2px;height:36px;background:#d0d0d0"></div>
<span style="top:932px;font-size:22px;line-height:22px;font-weight:400;color:#000;letter-spacing:1.3px;white-space:pre;-webkit-text-stroke:0.2px #000;left:509px;">006</span>
<span style="top:932px;font-size:22px;line-height:22px;font-weight:400;color:#800000;letter-spacing:1.6px;white-space:pre;-webkit-text-stroke:0.2px #800000;left:569px;">BIN2AL</span>
<span style="top:932px;font-size:22px;line-height:22px;font-weight:400;color:#0000f0;letter-spacing:1.05px;white-space:pre;-webkit-text-stroke:0.2px #0000f0;left:671px;">HISPOL</span>
<span style="top:932px;font-size:22px;line-height:22px;font-weight:400;color:#1e7a1e;letter-spacing:1.1px;white-space:pre;-webkit-text-stroke:0.2px #1e7a1e;left:773px;">CLCNXX</span>
<span style="top:932px;font-size:22px;line-height:22px;font-weight:400;color:#000;letter-spacing:1.9px;white-space:pre;-webkit-text-stroke:0.2px #000;right:1523.1px;">572.00</span>
<span style="top:932px;font-size:22px;line-height:22px;font-weight:400;color:#000;letter-spacing:1.9px;white-space:pre;-webkit-text-stroke:0.2px #000;right:1378.1px;">-264.00</span>
<span style="top:932px;font-size:22px;line-height:22px;font-weight:700;color:#000;letter-spacing:0.408px;white-space:pre;-webkit-text-stroke:0.12px #000;transform:scaleX(1.255);right:1217.592px;transform-origin:100% 0;">308.00</span>
<span style="top:932px;font-size:22px;line-height:22px;font-weight:400;color:#000;letter-spacing:1.9px;white-space:pre;-webkit-text-stroke:0.2px #000;right:1028.1px;">0.00</span>
<span style="top:932px;font-size:22px;line-height:22px;font-weight:400;color:#000;letter-spacing:1.9px;white-space:pre;-webkit-text-stroke:0.2px #000;right:858.1px;">0.00</span>
<span style="top:932px;font-size:22px;line-height:22px;font-weight:400;color:#000;letter-spacing:1.9px;white-space:pre;-webkit-text-stroke:0.2px #000;right:685.1px;">308.00</span>
<span style="top:932px;font-size:22px;line-height:22px;font-weight:400;color:#000;letter-spacing:1.9px;white-space:pre;-webkit-text-stroke:0.2px #000;right:516.1px;">18.48</span>
<span style="top:932px;font-size:22px;line-height:22px;font-weight:400;color:#000;letter-spacing:1.9px;white-space:pre;-webkit-text-stroke:0.2px #000;right:410.1px;">6.00</span>
<span style="top:932px;font-size:22px;line-height:22px;font-weight:700;color:#000;letter-spacing:0.408px;white-space:pre;-webkit-text-stroke:0.12px #000;transform:scaleX(1.255);right:229.592px;transform-origin:100% 0;">18.48</span>
<span style="top:932px;font-size:22px;line-height:22px;font-weight:400;color:#000;letter-spacing:1.9px;white-space:pre;-webkit-text-stroke:0.2px #000;right:127.1px;">6.00</span>
<div style="left:504px;top:960px;width:1924px;height:36px;background:#fff"></div>
<div style="left:504px;top:960px;width:58px;height:36px;background:#fffee6"></div>
<div style="left:767px;top:960px;width:133px;height:36px;background:#fffee6"></div>
<div style="left:2168px;top:960px;width:181px;height:36px;background:#c6dbc4"></div>
<div style="left:504px;top:994px;width:1924px;height:2px;background:#d0d0d0"></div>
<div style="left:562px;top:960px;width:2px;height:36px;background:#d0d0d0"></div>
<div style="left:663px;top:960px;width:2px;height:36px;background:#d0d0d0"></div>
<div style="left:766px;top:960px;width:2px;height:36px;background:#d0d0d0"></div>
<div style="left:899px;top:960px;width:2px;height:36px;background:#d0d0d0"></div>
<div style="left:1053px;top:960px;width:2px;height:36px;background:#d0d0d0"></div>
<div style="left:1199px;top:960px;width:2px;height:36px;background:#d0d0d0"></div>
<div style="left:1361px;top:960px;width:2px;height:36px;background:#d0d0d0"></div>
<div style="left:1549px;top:960px;width:2px;height:36px;background:#d0d0d0"></div>
<div style="left:1719px;top:960px;width:2px;height:36px;background:#d0d0d0"></div>
<div style="left:1893px;top:960px;width:2px;height:36px;background:#d0d0d0"></div>
<div style="left:2061px;top:960px;width:2px;height:36px;background:#d0d0d0"></div>
<div style="left:2166px;top:960px;width:2px;height:36px;background:#d0d0d0"></div>
<div style="left:2349px;top:960px;width:2px;height:36px;background:#d0d0d0"></div>
<span style="top:968px;font-size:22px;line-height:22px;font-weight:400;color:#000;letter-spacing:1.3px;white-space:pre;-webkit-text-stroke:0.2px #000;left:509px;">007</span>
<span style="top:968px;font-size:22px;line-height:22px;font-weight:400;color:#800000;letter-spacing:1.6px;white-space:pre;-webkit-text-stroke:0.2px #800000;left:569px;">BIN2AL</span>
<span style="top:968px;font-size:22px;line-height:22px;font-weight:400;color:#0000f0;letter-spacing:1.05px;white-space:pre;-webkit-text-stroke:0.2px #0000f0;left:671px;">HISPOL</span>
<span style="top:968px;font-size:22px;line-height:22px;font-weight:400;color:#1e7a1e;letter-spacing:1.1px;white-space:pre;-webkit-text-stroke:0.2px #1e7a1e;left:773px;">NRNNXX</span>
<span style="top:968px;font-size:22px;line-height:22px;font-weight:400;color:#000;letter-spacing:1.9px;white-space:pre;-webkit-text-stroke:0.2px #000;right:1523.1px;">359.96</span>
<span style="top:968px;font-size:22px;line-height:22px;font-weight:400;color:#000;letter-spacing:1.9px;white-space:pre;-webkit-text-stroke:0.2px #000;right:1378.1px;">0.00</span>
<span style="top:968px;font-size:22px;line-height:22px;font-weight:700;color:#000;letter-spacing:0.408px;white-space:pre;-webkit-text-stroke:0.12px #000;transform:scaleX(1.255);right:1217.592px;transform-origin:100% 0;">359.96</span>
<span style="top:968px;font-size:22px;line-height:22px;font-weight:400;color:#000;letter-spacing:1.9px;white-space:pre;-webkit-text-stroke:0.2px #000;right:1028.1px;">0.00</span>
<span style="top:968px;font-size:22px;line-height:22px;font-weight:400;color:#000;letter-spacing:1.9px;white-space:pre;-webkit-text-stroke:0.2px #000;right:858.1px;">0.00</span>
<span style="top:968px;font-size:22px;line-height:22px;font-weight:400;color:#000;letter-spacing:1.9px;white-space:pre;-webkit-text-stroke:0.2px #000;right:685.1px;">359.96</span>
<span style="top:968px;font-size:22px;line-height:22px;font-weight:400;color:#000;letter-spacing:1.9px;white-space:pre;-webkit-text-stroke:0.2px #000;right:516.1px;">21.60</span>
<span style="top:968px;font-size:22px;line-height:22px;font-weight:400;color:#000;letter-spacing:1.9px;white-space:pre;-webkit-text-stroke:0.2px #000;right:410.1px;">6.00</span>
<span style="top:968px;font-size:22px;line-height:22px;font-weight:700;color:#000;letter-spacing:0.408px;white-space:pre;-webkit-text-stroke:0.12px #000;transform:scaleX(1.255);right:229.592px;transform-origin:100% 0;">21.60</span>
<span style="top:968px;font-size:22px;line-height:22px;font-weight:400;color:#000;letter-spacing:1.9px;white-space:pre;-webkit-text-stroke:0.2px #000;right:127.1px;">6.00</span>
<div style="left:504px;top:996px;width:1924px;height:36px;background:#fff"></div>
<div style="left:504px;top:996px;width:58px;height:36px;background:#fffee6"></div>
<div style="left:767px;top:996px;width:133px;height:36px;background:#fffee6"></div>
<div style="left:2168px;top:996px;width:181px;height:36px;background:#c6dbc4"></div>
<div style="left:504px;top:1030px;width:1924px;height:2px;background:#d0d0d0"></div>
<div style="left:562px;top:996px;width:2px;height:36px;background:#d0d0d0"></div>
<div style="left:663px;top:996px;width:2px;height:36px;background:#d0d0d0"></div>
<div style="left:766px;top:996px;width:2px;height:36px;background:#d0d0d0"></div>
<div style="left:899px;top:996px;width:2px;height:36px;background:#d0d0d0"></div>
<div style="left:1053px;top:996px;width:2px;height:36px;background:#d0d0d0"></div>
<div style="left:1199px;top:996px;width:2px;height:36px;background:#d0d0d0"></div>
<div style="left:1361px;top:996px;width:2px;height:36px;background:#d0d0d0"></div>
<div style="left:1549px;top:996px;width:2px;height:36px;background:#d0d0d0"></div>
<div style="left:1719px;top:996px;width:2px;height:36px;background:#d0d0d0"></div>
<div style="left:1893px;top:996px;width:2px;height:36px;background:#d0d0d0"></div>
<div style="left:2061px;top:996px;width:2px;height:36px;background:#d0d0d0"></div>
<div style="left:2166px;top:996px;width:2px;height:36px;background:#d0d0d0"></div>
<div style="left:2349px;top:996px;width:2px;height:36px;background:#d0d0d0"></div>
<span style="top:1004px;font-size:22px;line-height:22px;font-weight:400;color:#000;letter-spacing:1.3px;white-space:pre;-webkit-text-stroke:0.2px #000;left:509px;">008</span>
<span style="top:1004px;font-size:22px;line-height:22px;font-weight:400;color:#800000;letter-spacing:1.6px;white-space:pre;-webkit-text-stroke:0.2px #800000;left:569px;">BIN2AL</span>
<span style="top:1004px;font-size:22px;line-height:22px;font-weight:400;color:#0000f0;letter-spacing:1.05px;white-space:pre;-webkit-text-stroke:0.2px #0000f0;left:671px;">HISPOL</span>
<span style="top:1004px;font-size:22px;line-height:22px;font-weight:400;color:#1e7a1e;letter-spacing:1.1px;white-space:pre;-webkit-text-stroke:0.2px #1e7a1e;left:773px;">NRNNXX</span>
<span style="top:1004px;font-size:22px;line-height:22px;font-weight:400;color:#000;letter-spacing:1.9px;white-space:pre;-webkit-text-stroke:0.2px #000;right:1523.1px;">431.95</span>
<span style="top:1004px;font-size:22px;line-height:22px;font-weight:400;color:#000;letter-spacing:1.9px;white-space:pre;-webkit-text-stroke:0.2px #000;right:1378.1px;">0.00</span>
<span style="top:1004px;font-size:22px;line-height:22px;font-weight:700;color:#000;letter-spacing:0.408px;white-space:pre;-webkit-text-stroke:0.12px #000;transform:scaleX(1.255);right:1217.592px;transform-origin:100% 0;">431.95</span>
<span style="top:1004px;font-size:22px;line-height:22px;font-weight:400;color:#000;letter-spacing:1.9px;white-space:pre;-webkit-text-stroke:0.2px #000;right:1028.1px;">0.00</span>
<span style="top:1004px;font-size:22px;line-height:22px;font-weight:400;color:#000;letter-spacing:1.9px;white-space:pre;-webkit-text-stroke:0.2px #000;right:858.1px;">0.00</span>
<span style="top:1004px;font-size:22px;line-height:22px;font-weight:400;color:#000;letter-spacing:1.9px;white-space:pre;-webkit-text-stroke:0.2px #000;right:685.1px;">431.95</span>
<span style="top:1004px;font-size:22px;line-height:22px;font-weight:400;color:#000;letter-spacing:1.9px;white-space:pre;-webkit-text-stroke:0.2px #000;right:516.1px;">25.92</span>
<span style="top:1004px;font-size:22px;line-height:22px;font-weight:400;color:#000;letter-spacing:1.9px;white-space:pre;-webkit-text-stroke:0.2px #000;right:410.1px;">6.00</span>
<span style="top:1004px;font-size:22px;line-height:22px;font-weight:700;color:#000;letter-spacing:0.408px;white-space:pre;-webkit-text-stroke:0.12px #000;transform:scaleX(1.255);right:229.592px;transform-origin:100% 0;">25.92</span>
<span style="top:1004px;font-size:22px;line-height:22px;font-weight:400;color:#000;letter-spacing:1.9px;white-space:pre;-webkit-text-stroke:0.2px #000;right:127.1px;">6.00</span>
<div style="left:504px;top:1032px;width:1924px;height:36px;background:#fff"></div>
<div style="left:504px;top:1032px;width:58px;height:36px;background:#fffee6"></div>
<div style="left:767px;top:1032px;width:133px;height:36px;background:#fffee6"></div>
<div style="left:2168px;top:1032px;width:181px;height:36px;background:#c6dbc4"></div>
<div style="left:504px;top:1066px;width:1924px;height:2px;background:#d0d0d0"></div>
<div style="left:562px;top:1032px;width:2px;height:36px;background:#d0d0d0"></div>
<div style="left:663px;top:1032px;width:2px;height:36px;background:#d0d0d0"></div>
<div style="left:766px;top:1032px;width:2px;height:36px;background:#d0d0d0"></div>
<div style="left:899px;top:1032px;width:2px;height:36px;background:#d0d0d0"></div>
<div style="left:1053px;top:1032px;width:2px;height:36px;background:#d0d0d0"></div>
<div style="left:1199px;top:1032px;width:2px;height:36px;background:#d0d0d0"></div>
<div style="left:1361px;top:1032px;width:2px;height:36px;background:#d0d0d0"></div>
<div style="left:1549px;top:1032px;width:2px;height:36px;background:#d0d0d0"></div>
<div style="left:1719px;top:1032px;width:2px;height:36px;background:#d0d0d0"></div>
<div style="left:1893px;top:1032px;width:2px;height:36px;background:#d0d0d0"></div>
<div style="left:2061px;top:1032px;width:2px;height:36px;background:#d0d0d0"></div>
<div style="left:2166px;top:1032px;width:2px;height:36px;background:#d0d0d0"></div>
<div style="left:2349px;top:1032px;width:2px;height:36px;background:#d0d0d0"></div>
<span style="top:1040px;font-size:22px;line-height:22px;font-weight:400;color:#000;letter-spacing:1.3px;white-space:pre;-webkit-text-stroke:0.2px #000;left:509px;">009</span>
<span style="top:1040px;font-size:22px;line-height:22px;font-weight:400;color:#800000;letter-spacing:1.6px;white-space:pre;-webkit-text-stroke:0.2px #800000;left:569px;">BIN2AL</span>
<span style="top:1040px;font-size:22px;line-height:22px;font-weight:400;color:#0000f0;letter-spacing:1.05px;white-space:pre;-webkit-text-stroke:0.2px #0000f0;left:671px;">HISPOL</span>
<span style="top:1040px;font-size:22px;line-height:22px;font-weight:400;color:#1e7a1e;letter-spacing:1.1px;white-space:pre;-webkit-text-stroke:0.2px #1e7a1e;left:773px;">CLCNXX</span>
<span style="top:1040px;font-size:22px;line-height:22px;font-weight:400;color:#000;letter-spacing:1.9px;white-space:pre;-webkit-text-stroke:0.2px #000;right:1523.1px;">1,206.84</span>
<span style="top:1040px;font-size:22px;line-height:22px;font-weight:400;color:#000;letter-spacing:1.9px;white-space:pre;-webkit-text-stroke:0.2px #000;right:1378.1px;">-261.48</span>
<span style="top:1040px;font-size:22px;line-height:22px;font-weight:700;color:#000;letter-spacing:0.408px;white-space:pre;-webkit-text-stroke:0.12px #000;transform:scaleX(1.255);right:1217.592px;transform-origin:100% 0;">945.36</span>
<span style="top:1040px;font-size:22px;line-height:22px;font-weight:400;color:#000;letter-spacing:1.9px;white-space:pre;-webkit-text-stroke:0.2px #000;right:1028.1px;">0.00</span>
<span style="top:1040px;font-size:22px;line-height:22px;font-weight:400;color:#000;letter-spacing:1.9px;white-space:pre;-webkit-text-stroke:0.2px #000;right:858.1px;">0.00</span>
<span style="top:1040px;font-size:22px;line-height:22px;font-weight:400;color:#000;letter-spacing:1.9px;white-space:pre;-webkit-text-stroke:0.2px #000;right:685.1px;">905.13</span>
<span style="top:1040px;font-size:22px;line-height:22px;font-weight:400;color:#000;letter-spacing:1.9px;white-space:pre;-webkit-text-stroke:0.2px #000;right:516.1px;">54.31</span>
<span style="top:1040px;font-size:22px;line-height:22px;font-weight:400;color:#000;letter-spacing:1.9px;white-space:pre;-webkit-text-stroke:0.2px #000;right:410.1px;">6.00</span>
<span style="top:1040px;font-size:22px;line-height:22px;font-weight:700;color:#000;letter-spacing:0.408px;white-space:pre;-webkit-text-stroke:0.12px #000;transform:scaleX(1.255);right:229.592px;transform-origin:100% 0;">94.54</span>
<span style="top:1040px;font-size:22px;line-height:22px;font-weight:400;color:#000;letter-spacing:1.9px;white-space:pre;-webkit-text-stroke:0.2px #000;right:127.1px;">10.48</span>
</div></div>
<div style="left:480px;top:778px;width:22px;height:2px;background:#000"></div>
<div style="left:480px;top:780px;width:22px;height:2px;background:#fff"></div>
<div style="left:480px;top:814px;width:22px;height:2px;background:#000"></div>
<div style="left:480px;top:816px;width:22px;height:2px;background:#fff"></div>
<div style="left:480px;top:850px;width:22px;height:2px;background:#000"></div>
<div style="left:480px;top:852px;width:22px;height:2px;background:#fff"></div>
<div style="left:480px;top:886px;width:22px;height:2px;background:#000"></div>
<div style="left:480px;top:888px;width:22px;height:2px;background:#fff"></div>
<div style="left:480px;top:922px;width:22px;height:2px;background:#000"></div>
<div style="left:480px;top:924px;width:22px;height:2px;background:#fff"></div>
<div style="left:480px;top:958px;width:22px;height:2px;background:#000"></div>
<div style="left:480px;top:960px;width:22px;height:2px;background:#fff"></div>
<div style="left:480px;top:994px;width:22px;height:2px;background:#000"></div>
<div style="left:480px;top:996px;width:22px;height:2px;background:#fff"></div>
<div style="left:480px;top:1030px;width:22px;height:2px;background:#000"></div>
<div style="left:480px;top:1032px;width:22px;height:2px;background:#fff"></div>
<div style="left:480px;top:1066px;width:22px;height:2px;background:#000"></div>
<div style="left:480px;top:709px;width:2px;height:359px;background:#fff"></div>
<svg style="left:486px;top:750px" width="13" height="23"><polygon points="0,0 12,11 0,22" fill="#000"/></svg>
<div style="left:2428px;top:709px;width:33px;height:704px;background:#fff"></div>
<div style="left:2428px;top:709px;width:2px;height:704px;background:#c8c8c8"></div>
<div style="left:2428px;top:741px;width:33px;height:2px;background:#c8c8c8"></div>
<div style="left:2430px;top:743px;width:31px;height:33px;background:#dadada"></div>
<div style="left:2428px;top:1377px;width:33px;height:2px;background:#c8c8c8"></div>
<div style="left:2428px;top:1410px;width:33px;height:2px;background:#c8c8c8"></div>
<svg style="left:2436px;top:716px" width="20" height="20"><polyline points="3,13 10,6 17,13" fill="none" stroke="#606060" stroke-width="2.5"/></svg>
<svg style="left:2436px;top:1385px" width="20" height="20"><polyline points="3,6 10,13 17,6" fill="none" stroke="#606060" stroke-width="2.5"/></svg>
<div style="left:479px;top:1412px;width:1949px;height:34px;background:#fff"></div>
<div style="left:479px;top:1412px;width:1949px;height:2px;background:#c8c8c8"></div>
<div style="left:479px;top:1414px;width:2px;height:32px;background:#c8c8c8"></div>
<div style="left:512px;top:1414px;width:2px;height:32px;background:#c8c8c8"></div>
<div style="left:515px;top:1414px;width:33px;height:32px;background:#dadada"></div>
<div style="left:2394px;top:1414px;width:2px;height:32px;background:#c8c8c8"></div>
<div style="left:2426px;top:1412px;width:2px;height:34px;background:#c8c8c8"></div>
<div style="left:2428px;top:1412px;width:33px;height:34px;background:#f0f0f0"></div>
<svg style="left:487px;top:1420px" width="20" height="20"><polyline points="13,3 6,10 13,17" fill="none" stroke="#606060" stroke-width="2.5"/></svg>
<svg style="left:2401px;top:1420px" width="20" height="20"><polyline points="6,3 13,10 6,17" fill="none" stroke="#606060" stroke-width="2.5"/></svg>
<div style="left:469px;top:1468px;width:2003px;height:110px;box-sizing:border-box;border:2px solid #a0a0a0;box-shadow:inset 2px 2px #fff, 2px 2px #fff;"></div>
<div style="left:480px;top:1457px;width:400px;height:25px;background:#f0f0f0"></div>
<span style="top:1462px;font-size:22px;line-height:22px;font-weight:400;color:#000;letter-spacing:1.5px;white-space:pre;-webkit-text-stroke:0.2px #000;left:485px;">Resumen de la Expedición en EUR</span>
<span style="top:1494px;font-size:22px;line-height:22px;font-weight:400;color:#000;letter-spacing:1.6px;white-space:pre;-webkit-text-stroke:0.2px #000;left:805px;">Div.</span>
<div style="left:805px;top:1523px;width:62px;height:39px;box-sizing:border-box;background:#ffffe1;border:2px solid;border-color:#a0a0a0 #fff #fff #a0a0a0;box-shadow:inset 2px 2px #696969, inset -2px -2px #e3e3e3;"></div>
<span style="top:1532px;font-size:22px;line-height:22px;font-weight:700;color:#000;letter-spacing:1.4px;white-space:pre;-webkit-text-stroke:0.12px #000;left:811px;">EUR</span>
<span style="top:1494px;font-size:22px;line-height:22px;font-weight:400;color:#000;letter-spacing:1.6px;white-space:pre;-webkit-text-stroke:0.2px #000;left:901px;">Fac.Exp.</span>
<div style="left:901px;top:1523px;width:142px;height:39px;box-sizing:border-box;background:#f0f0f0;border:2px solid;border-color:#a0a0a0 #fff #fff #a0a0a0;box-shadow:inset 2px 2px #696969, inset -2px -2px #e3e3e3;"></div>
<span style="top:1532px;font-size:22px;line-height:22px;font-weight:700;color:#000;letter-spacing:0.408px;white-space:pre;-webkit-text-stroke:0.12px #000;transform:scaleX(1.255);right:1536.592px;transform-origin:100% 0;">20,098.05</span>
<span style="top:1494px;font-size:22px;line-height:22px;font-weight:400;color:#000;letter-spacing:1.6px;white-space:pre;-webkit-text-stroke:0.2px #000;left:1060px;">Fac.Dir.</span>
<div style="left:1060px;top:1523px;width:127px;height:39px;box-sizing:border-box;background:#f0f0f0;border:2px solid;border-color:#a0a0a0 #fff #fff #a0a0a0;box-shadow:inset 2px 2px #696969, inset -2px -2px #e3e3e3;"></div>
<span style="top:1532px;font-size:22px;line-height:22px;font-weight:700;color:#000;letter-spacing:0.408px;white-space:pre;-webkit-text-stroke:0.12px #000;transform:scaleX(1.255);right:1392.592px;transform-origin:100% 0;">-525.48</span>
<span style="top:1494px;font-size:22px;line-height:22px;font-weight:400;color:#000;letter-spacing:1.6px;white-space:pre;-webkit-text-stroke:0.2px #000;left:1204px;">Total Fac.</span>
<div style="left:1204px;top:1523px;width:158px;height:39px;box-sizing:border-box;background:#f0f0f0;border:2px solid;border-color:#a0a0a0 #fff #fff #a0a0a0;box-shadow:inset 2px 2px #696969, inset -2px -2px #e3e3e3;"></div>
<span style="top:1532px;font-size:22px;line-height:22px;font-weight:700;color:#1a1ae6;letter-spacing:0.408px;white-space:pre;-webkit-text-stroke:0.12px #1a1ae6;transform:scaleX(1.255);right:1217.592px;transform-origin:100% 0;">19,572.57</span>
<span style="top:1494px;font-size:22px;line-height:22px;font-weight:400;color:#000;letter-spacing:1.6px;white-space:pre;-webkit-text-stroke:0.2px #000;left:1381px;">T.Fletes</span>
<div style="left:1381px;top:1523px;width:157px;height:39px;box-sizing:border-box;background:#f0f0f0;border:2px solid;border-color:#a0a0a0 #fff #fff #a0a0a0;box-shadow:inset 2px 2px #696969, inset -2px -2px #e3e3e3;"></div>
<span style="top:1532px;font-size:22px;line-height:22px;font-weight:700;color:#800000;letter-spacing:0.408px;white-space:pre;-webkit-text-stroke:0.12px #800000;transform:scaleX(1.255);right:1041.592px;transform-origin:100% 0;">0.00</span>
<span style="top:1494px;font-size:22px;line-height:22px;font-weight:400;color:#000;letter-spacing:1.6px;white-space:pre;-webkit-text-stroke:0.2px #000;left:1556px;">T.Gastos</span>
<div style="left:1556px;top:1523px;width:157px;height:39px;box-sizing:border-box;background:#f0f0f0;border:2px solid;border-color:#a0a0a0 #fff #fff #a0a0a0;box-shadow:inset 2px 2px #696969, inset -2px -2px #e3e3e3;"></div>
<span style="top:1532px;font-size:22px;line-height:22px;font-weight:700;color:#800000;letter-spacing:0.408px;white-space:pre;-webkit-text-stroke:0.12px #800000;transform:scaleX(1.255);right:866.592px;transform-origin:100% 0;">0.00</span>
<span style="top:1494px;font-size:22px;line-height:22px;font-weight:400;color:#000;letter-spacing:1.6px;white-space:pre;-webkit-text-stroke:0.2px #000;left:1732px;">T.Cta.Vta.</span>
<div style="left:1732px;top:1523px;width:157px;height:39px;box-sizing:border-box;background:#f0f0f0;border:2px solid;border-color:#a0a0a0 #fff #fff #a0a0a0;box-shadow:inset 2px 2px #696969, inset -2px -2px #e3e3e3;"></div>
<span style="top:1532px;font-size:22px;line-height:22px;font-weight:700;color:#800000;letter-spacing:0.408px;white-space:pre;-webkit-text-stroke:0.12px #800000;transform:scaleX(1.255);right:690.592px;transform-origin:100% 0;">19,532.34</span>
<span style="top:1494px;font-size:22px;line-height:22px;font-weight:400;color:#000;letter-spacing:1.6px;white-space:pre;-webkit-text-stroke:0.2px #000;left:1908px;">T.Comisión</span>
<div style="left:1908px;top:1523px;width:157px;height:39px;box-sizing:border-box;background:#f0f0f0;border:2px solid;border-color:#a0a0a0 #fff #fff #a0a0a0;box-shadow:inset 2px 2px #696969, inset -2px -2px #e3e3e3;"></div>
<span style="top:1532px;font-size:22px;line-height:22px;font-weight:700;color:#1a1ae6;letter-spacing:0.408px;white-space:pre;-webkit-text-stroke:0.12px #1a1ae6;transform:scaleX(1.255);right:514.592px;transform-origin:100% 0;">1,171.94</span>
<span style="top:1494px;font-size:22px;line-height:22px;font-weight:400;color:#000;letter-spacing:1.6px;white-space:pre;-webkit-text-stroke:0.2px #000;left:2069px;">%Com.</span>
<div style="left:2069px;top:1523px;width:79px;height:39px;box-sizing:border-box;background:#f0f0f0;border:2px solid;border-color:#a0a0a0 #fff #fff #a0a0a0;box-shadow:inset 2px 2px #696969, inset -2px -2px #e3e3e3;"></div>
<span style="top:1532px;font-size:22px;line-height:22px;font-weight:700;color:#000;letter-spacing:0.408px;white-space:pre;-webkit-text-stroke:0.12px #000;transform:scaleX(1.255);left:2075px;transform-origin:0 0;">6.00</span>
<span style="top:1494px;font-size:22px;line-height:22px;font-weight:400;color:#000;letter-spacing:1.6px;white-space:pre;-webkit-text-stroke:0.2px #000;left:2164px;">T.Resultado</span>
<div style="left:2164px;top:1523px;width:175px;height:39px;box-sizing:border-box;background:#c6dbc4;border:2px solid;border-color:#a0a0a0 #fff #fff #a0a0a0;box-shadow:inset 2px 2px #696969, inset -2px -2px #e3e3e3;"></div>
<span style="top:1532px;font-size:22px;line-height:22px;font-weight:700;color:#000;letter-spacing:0.408px;white-space:pre;-webkit-text-stroke:0.12px #000;transform:scaleX(1.255);right:240.592px;transform-origin:100% 0;">1,212.17</span>
<span style="top:1494px;font-size:22px;line-height:22px;font-weight:400;color:#000;letter-spacing:1.6px;white-space:pre;-webkit-text-stroke:0.2px #000;left:2356px;">%Res.</span>
<div style="left:2356px;top:1523px;width:95px;height:39px;box-sizing:border-box;background:#80f050;border:2px solid;border-color:#a0a0a0 #fff #fff #a0a0a0;box-shadow:inset 2px 2px #696969, inset -2px -2px #e3e3e3;"></div>
<span style="top:1532px;font-size:22px;line-height:22px;font-weight:700;color:#000;letter-spacing:0.408px;white-space:pre;-webkit-text-stroke:0.12px #000;transform:scaleX(1.255);left:2362px;transform-origin:0 0;">6.21</span>
</body></html>
